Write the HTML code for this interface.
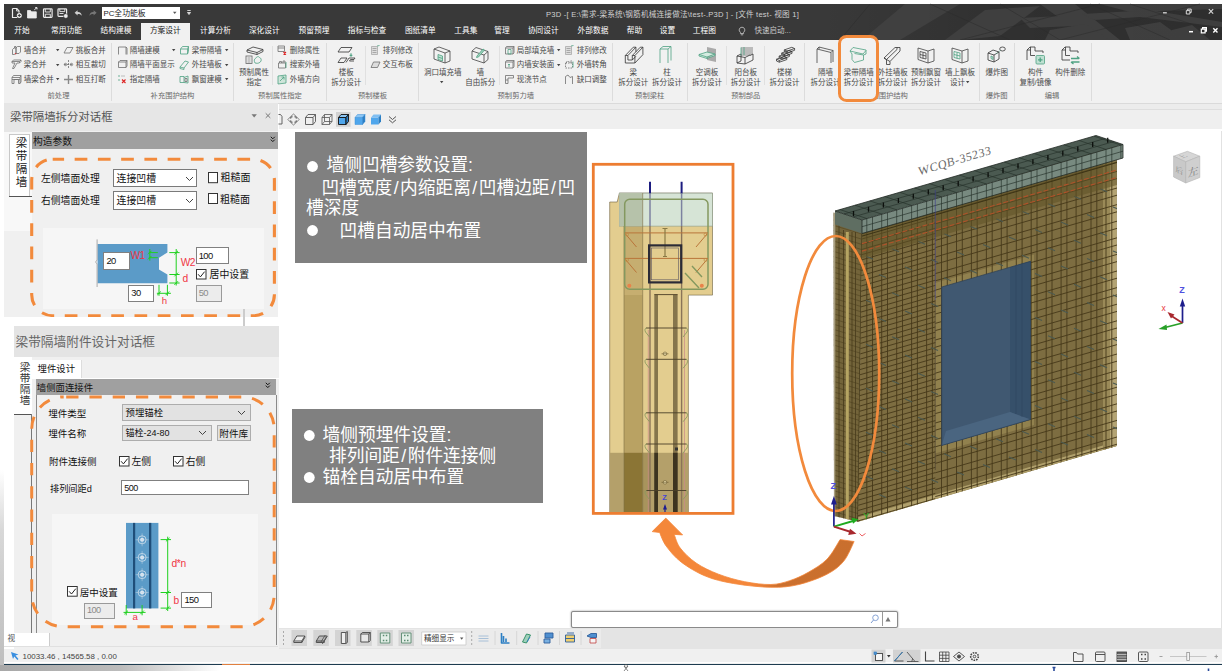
<!DOCTYPE html>
<html lang="zh-CN"><head><meta charset="utf-8"><title>P3D</title>
<style>
html,body{margin:0;padding:0;background:#fff;}
body{width:1230px;height:671px;overflow:hidden;position:relative;font-family:"Liberation Sans","Noto Sans CJK SC",sans-serif;}
#root{position:absolute;left:0;top:0;width:1230px;height:671px;overflow:hidden;background:#fff;}
.t{position:absolute;white-space:nowrap;margin:0;padding:0;}
.b{position:absolute;box-sizing:content-box;margin:0;padding:0;}
svg{display:block;overflow:visible;}
</style></head>
<body><div id="root">
<!-- part_top -->
<div class="b" style="left:4px;top:4px;width:1218px;height:36px;background:#393939;"></div>
<div class="b" style="left:820px;top:4px;width:402px;height:36px;background:linear-gradient(to right,rgba(0,0,0,0) 0,rgba(0,0,0,.16) 45%,rgba(0,0,0,.2) 100%);"></div>
<svg class="b" style="left:4px;top:4px" width="1218" height="36" viewBox="4 4 1218 36">
<g fill="#434343" opacity=".8">
<polygon points="905,4 960,4 900,40 862,40"/>
<polygon points="985,10 1040,6 1000,36 960,40 945,40"/>
<polygon points="1040,4 1075,4 1120,40 1090,40"/>
<polygon points="1082,14 1150,10 1222,22 1222,27 1140,17 1095,20"/>
<polygon points="1100,4 1222,4 1222,9 1130,12"/>
<polygon points="1050,30 1085,24 1110,40 1045,40"/>
<polygon points="1125,28 1160,22 1185,40 1130,40"/>
<polygon points="1172,30 1192,25 1210,40 1168,40"/>
<polygon points="1020,18 1060,16 1075,26 1030,28"/>
</g>
<g stroke="#2a2a2a" stroke-width=".6" fill="none" opacity=".8">
<path d="M870 4L840 40M930 4L1010 40M1000 4L1060 40M1090 4L1170 40M1130 4L1222 34M960 40L1100 4M1060 40L1200 4"/>
</g></svg>
<svg class="b" style="left:4px;top:4px" width="200" height="18" viewBox="4 4 200 18">
<g fill="none" stroke="#ececec" stroke-width="1.200" stroke-linejoin="round">
<path d="M12.500 8.500h4.200l2.300 2.300v2M12.500 8.500v9h4.500"/><path d="M16.500 8.700v2.300h2.300" stroke-width=".8"/>
<circle cx="19.300" cy="15.500" r="2.500" fill="#ececec" stroke="none"/><path d="M19.300 14v3M17.800 15.500h3" stroke="#363636" stroke-width=".9"/>
<path d="M27.500 18v-7.500h3l1 1.300h4.800v6.200z" fill="#ececec" stroke-width=".8"/><path d="M34.300 9.800l2.500-2M35.200 7.600h1.800v1.800" stroke-width="1"/>
<rect x="43.500" y="8.800" width="8.600" height="8.600" rx=".8"/><path d="M45.300 9v3h5V9M45.300 17.200v-3h5v3" stroke-width=".9"/>
<rect x="58" y="8.800" width="8.600" height="7.600" rx=".8"/><path d="M59.800 9v2.600h5V9M59.500 13.500h4" stroke-width=".9"/><circle cx="65.800" cy="16" r="2.300" fill="#ececec" stroke="#363636" stroke-width=".6"/>
</g>
<path d="M74.600 12.800l3-2.600v1.700c2.500-.2 4 1.200 4.200 4-.9-1.400-2.200-1.900-4.200-1.800v1.500z" fill="#cfcfcf"/>
<path d="M96.600 12.800l-3-2.600v1.700c-2.500-.2-4 1.200-4.200 4 .9-1.400 2.200-1.900 4.200-1.800v1.500z" fill="#767676"/>
<path d="M187.300 10.500h3.400M187.500 12.500h3l-1.500 2z" stroke="#ddd" stroke-width=".9" fill="#ddd"/>
</svg>
<div class="b" style="left:102px;top:6.5px;width:78px;height:12.5px;background:#fff;"></div>
<div class="t" style="left:103.5px;top:8.6px;font-size:7.8px;line-height:10.9px;color:#222;">PC全功能板</div>
<svg class="b" style="left:172px;top:11px" width="6" height="4"><path d="M1 .8h3.500l-1.750 2.200z" fill="#555"/></svg>
<div class="t" style="left:546px;top:9.75px;font-size:7.6px;line-height:10.6px;color:#d0d0d0;letter-spacing:0.22px;">P3D -[ E:\需求-梁系统\钢筋机械连接做法\test-.P3D ] - [文件 test- 视图 1]</div>
<svg class="b" style="left:1150px;top:4px" width="72" height="36" viewBox="1150 4 72 36">
<g stroke="#d8d8d8" stroke-width="1.300" fill="none">
<path d="M1163 12.800h3.800"/>
<path d="M1186.300 10.600h3.600v3.400h-3.600z M1187.600 10.600v-1.500h3.600v3.400h-1.300" stroke-width="1"/>
<path d="M1208.800 9.200l4.400 4.400M1213.200 9.200l-4.400 4.400" stroke-width="1.100"/>
</g>
<g stroke="#fff" stroke-width="1.500" fill="none">
<path d="M1189 31.700h4"/>
<path d="M1201.300 29.200h3.800v3.600h-3.800z M1202.600 29.200v-1.600h3.800v3.600h-1.300" stroke-width="1.200"/>
<path d="M1213.300 28.300l4.200 4.200M1217.500 28.300l-4.200 4.200" stroke-width="1.400"/>
</g></svg>
<div class="b" style="left:141px;top:22.5px;width:48.5px;height:18px;background:#f1f1f1;"></div>
<div class="t" style="left:-8.0px;top:26.15px;font-size:7.7px;line-height:10.8px;color:#fff;width:60px;text-align:center;">开始</div>
<div class="t" style="left:36.5px;top:26.15px;font-size:7.7px;line-height:10.8px;color:#fff;width:60px;text-align:center;">常用功能</div>
<div class="t" style="left:86.0px;top:26.15px;font-size:7.7px;line-height:10.8px;color:#fff;width:60px;text-align:center;">结构建模</div>
<div class="t" style="left:135.3px;top:26.15px;font-size:7.7px;line-height:10.8px;color:#222;width:60px;text-align:center;">方案设计</div>
<div class="t" style="left:185.5px;top:26.15px;font-size:7.7px;line-height:10.8px;color:#fff;width:60px;text-align:center;">计算分析</div>
<div class="t" style="left:234.3px;top:26.15px;font-size:7.7px;line-height:10.8px;color:#fff;width:60px;text-align:center;">深化设计</div>
<div class="t" style="left:284.0px;top:26.15px;font-size:7.7px;line-height:10.8px;color:#fff;width:60px;text-align:center;">预留预埋</div>
<div class="t" style="left:337.0px;top:26.15px;font-size:7.7px;line-height:10.8px;color:#fff;width:60px;text-align:center;">指标与检查</div>
<div class="t" style="left:390.3px;top:26.15px;font-size:7.7px;line-height:10.8px;color:#fff;width:60px;text-align:center;">图纸清单</div>
<div class="t" style="left:435.8px;top:26.15px;font-size:7.7px;line-height:10.8px;color:#fff;width:60px;text-align:center;">工具集</div>
<div class="t" style="left:472.0px;top:26.15px;font-size:7.7px;line-height:10.8px;color:#fff;width:60px;text-align:center;">管理</div>
<div class="t" style="left:513.3px;top:26.15px;font-size:7.7px;line-height:10.8px;color:#fff;width:60px;text-align:center;">协同设计</div>
<div class="t" style="left:563.0px;top:26.15px;font-size:7.7px;line-height:10.8px;color:#fff;width:60px;text-align:center;">外部数据</div>
<div class="t" style="left:604.5px;top:26.15px;font-size:7.7px;line-height:10.8px;color:#fff;width:60px;text-align:center;">帮助</div>
<div class="t" style="left:637.5px;top:26.15px;font-size:7.7px;line-height:10.8px;color:#fff;width:60px;text-align:center;">设置</div>
<div class="t" style="left:674.4px;top:26.15px;font-size:7.7px;line-height:10.8px;color:#fff;width:60px;text-align:center;">工程图</div>
<div class="t" style="left:754.5px;top:26.3px;font-size:7.5px;line-height:10.5px;color:#c8c8c8;">快速启动...</div>
<svg class="b" style="left:737px;top:26px" width="10" height="11"><path d="M5 1.200a2.800 2.800 0 0 1 1.600 5.100v1.200h-3.200v-1.200a2.800 2.800 0 0 1 1.600-5.100z M3.800 8.800h2.400" fill="none" stroke="#ccc" stroke-width=".8"/></svg>
<!-- part_ribbon -->
<div class="b" style="left:4px;top:40px;width:1218px;height:63.5px;background:#f1f1f1;"></div>
<div class="b" style="left:4px;top:103px;width:1218px;height:1px;background:#dadada;"></div>
<svg class="b" style="left:10.5px;top:44.5px" width="11" height="11" viewBox="0 0 11 11" fill="none" stroke="#707070" stroke-width="0.8" stroke-linejoin="round"><path d="M1.500 9.500V4.500l1.500-1.500h2v5.500l-1.500 1zM5 8.500V3l1.500-1.500h3V7l-1.500 1.500z M3.500 3V1.500h1.500V3"/><path d="M3.800 8.700h1.400" stroke="#d33" stroke-width="1"/></svg><div class="t" style="left:23.8px;top:45.5px;font-size:7.5px;line-height:10.5px;color:#484848;">墙合并</div><svg class="b" style="left:55.5px;top:49px" width="4" height="3"><path d="M0 0h3.400l-1.700 2.200z" fill="#444"/></svg>
<svg class="b" style="left:10.5px;top:59.2px" width="11" height="11" viewBox="0 0 11 11" fill="none" stroke="#707070" stroke-width="0.8" stroke-linejoin="round"><path d="M1 2.500l1.500-1.500h7.500l-1.500 1.500z M1 2.500v1.500h3L1.500 9.500h1.500L6 4h2.500V2.500 M8.500 4l1.500-1.500V1"/></svg><div class="t" style="left:23.8px;top:60.2px;font-size:7.5px;line-height:10.5px;color:#484848;">梁合并</div><svg class="b" style="left:55.5px;top:63.7px" width="4" height="3"><path d="M0 0h3.400l-1.700 2.200z" fill="#444"/></svg>
<svg class="b" style="left:10.5px;top:73.5px" width="11" height="11" viewBox="0 0 11 11" fill="none" stroke="#707070" stroke-width="0.8" stroke-linejoin="round"><path d="M1 3.500l1.500-2h7.500l-1 2z M1 3.500v6h2v-4h4.500v4h1.500v-6 M9 9.500l1-1.500V1.500 M1 5.500h8"/></svg><div class="t" style="left:23.8px;top:74.5px;font-size:7.5px;line-height:10.5px;color:#484848;">墙梁合并</div><svg class="b" style="left:55.5px;top:78px" width="4" height="3"><path d="M0 0h3.400l-1.700 2.200z" fill="#444"/></svg>
<svg class="b" style="left:62.5px;top:44.5px" width="11" height="11" viewBox="0 0 11 11" fill="none" stroke="#707070" stroke-width="0.8" stroke-linejoin="round"><path d="M1 8l3-5.500h6L7 8z"/></svg><div class="t" style="left:75.8px;top:45.5px;font-size:7.5px;line-height:10.5px;color:#484848;">挑板合并</div>
<svg class="b" style="left:62.5px;top:59.2px" width="11" height="11" viewBox="0 0 11 11" fill="none" stroke="#707070" stroke-width="0.8" stroke-linejoin="round"><path d="M5.500 1v9M1 5.500h9" stroke-dasharray="2 1"/><circle cx="2.500" cy="5.500" r="1.200"/><circle cx="8.500" cy="5.500" r="1.200"/></svg><div class="t" style="left:75.8px;top:60.2px;font-size:7.5px;line-height:10.5px;color:#484848;">相互裁切</div>
<svg class="b" style="left:62.5px;top:73.5px" width="11" height="11" viewBox="0 0 11 11" fill="none" stroke="#707070" stroke-width="0.8" stroke-linejoin="round"><path d="M5.500 1v9M1 5.500h9" stroke="#888" stroke-width="1.400"/></svg><div class="t" style="left:75.8px;top:74.5px;font-size:7.5px;line-height:10.5px;color:#484848;">相互打断</div>
<div class="t" style="left:18.5px;top:90.65px;font-size:7.3px;line-height:10.2px;color:#6a6a6a;width:80px;text-align:center;">前处理</div>
<div class="b" style="left:111px;top:43px;width:1px;height:58px;background:#dcdcdc;"></div>
<svg class="b" style="left:116.5px;top:44.5px" width="11" height="11" viewBox="0 0 11 11" fill="none" stroke="#707070" stroke-width="0.8" stroke-linejoin="round"><path d="M1.500 9.500V2h7.500v7.500M9 2l1 1v6.500"/></svg><div class="t" style="left:129.8px;top:45.5px;font-size:7.5px;line-height:10.5px;color:#484848;">隔墙建模</div><svg class="b" style="left:172.0px;top:49px" width="4" height="3"><path d="M0 0h3.400l-1.700 2.200z" fill="#444"/></svg>
<svg class="b" style="left:116.5px;top:59.2px" width="11" height="11" viewBox="0 0 11 11" fill="none" stroke="#707070" stroke-width="0.8" stroke-linejoin="round"><path d="M1.500 3h7.500v5.500H1.500z M1.500 3l1.500-1.500h7L9 3 M10 1.500v5.500l-1 1.500"/></svg><div class="t" style="left:129.8px;top:60.2px;font-size:7.5px;line-height:10.5px;color:#484848;">隔墙平面显示</div>
<svg class="b" style="left:116.5px;top:73.5px" width="11" height="11" viewBox="0 0 11 11" fill="none" stroke="#707070" stroke-width="0.8" stroke-linejoin="round"><path d="M2 1v2M2 5v2" stroke="#4fa283"/><path d="M5 5.500l3.500 3.500M8.500 5.500L5 9" stroke="#d22" stroke-width="1.100"/><path d="M4.500 2h4" stroke-dasharray="1 1"/></svg><div class="t" style="left:129.8px;top:74.5px;font-size:7.5px;line-height:10.5px;color:#484848;">指定隔墙</div>
<svg class="b" style="left:178.5px;top:44.5px" width="11" height="11" viewBox="0 0 11 11" fill="none" stroke="#707070" stroke-width="0.8" stroke-linejoin="round"><path d="M1.500 4h7v5h-7z M1.500 4l2-2.500h6L8.500 4 M9.500 1.500v5l-1 2.500" stroke="#4fa283"/></svg><div class="t" style="left:191.8px;top:45.5px;font-size:7.5px;line-height:10.5px;color:#484848;">梁带隔墙</div><svg class="b" style="left:224.5px;top:49px" width="4" height="3"><path d="M0 0h3.400l-1.700 2.200z" fill="#444"/></svg>
<svg class="b" style="left:178.5px;top:59.2px" width="11" height="11" viewBox="0 0 11 11" fill="none" stroke="#707070" stroke-width="0.8" stroke-linejoin="round"><path d="M1 8l5-6 3.500 1L5 9z M1 8v1.500l4 1V9" stroke="#4fa283"/></svg><div class="t" style="left:191.8px;top:60.2px;font-size:7.5px;line-height:10.5px;color:#484848;">外挂墙板</div><svg class="b" style="left:224.5px;top:63.7px" width="4" height="3"><path d="M0 0h3.400l-1.700 2.200z" fill="#444"/></svg>
<svg class="b" style="left:178.5px;top:73.5px" width="11" height="11" viewBox="0 0 11 11" fill="none" stroke="#707070" stroke-width="0.8" stroke-linejoin="round"><path d="M1 2.500h4v6H1z M5 3.500l4-1.500v7l-4-.5" stroke="#4fa283"/><path d="M6 4.500h2v3H6z"/></svg><div class="t" style="left:191.8px;top:74.5px;font-size:7.5px;line-height:10.5px;color:#484848;">飘窗建模</div><svg class="b" style="left:224.5px;top:78px" width="4" height="3"><path d="M0 0h3.400l-1.700 2.200z" fill="#444"/></svg>
<div class="t" style="left:132.5px;top:90.65px;font-size:7.3px;line-height:10.2px;color:#6a6a6a;width:80px;text-align:center;">补充围护结构</div>
<div class="b" style="left:233px;top:43px;width:1px;height:58px;background:#dcdcdc;"></div>
<svg class="b" style="left:244.5px;top:46px" width="19" height="19" viewBox="0 0 19 19" fill="none" stroke="#646464" stroke-width="0.8" stroke-linejoin="miter"><path d="M2 4l6-3 10 2.500-6 3z M2 4v2l10 2.500V6.500 M18 3.500v2l-6 3" stroke="#333"/><rect x="1" y="10" width="6" height="7.500"/><path d="M2.500 12h3M2.500 14h3M2.500 16h3" stroke-width=".6"/><path d="M10 17c-1-2-1-4 .5-4.500 1-2 3-2.500 4-1 1.500.5 2 2 1.500 3.500-.5 1.500-3 3-6 2z" stroke="#4fa283"/></svg><div class="t" style="left:224.0px;top:68.0px;font-size:7.5px;line-height:10.5px;color:#484848;width:60px;text-align:center;">预制属性</div><div class="t" style="left:224.0px;top:78.1px;font-size:7.5px;line-height:10.5px;color:#484848;width:60px;text-align:center;">指定</div>
<div class="b" style="left:272px;top:46px;width:1px;height:39px;background:#e0e0e0;"></div>
<svg class="b" style="left:276.5px;top:44.5px" width="11" height="11" viewBox="0 0 11 11" fill="none" stroke="#707070" stroke-width="0.8" stroke-linejoin="round"><rect x="1" y="1" width="6.500" height="5.500"/><path d="M1 3h6.500"/><path d="M6.500 7l2.500 2.500M9 7L6.500 9.500" stroke="#d22" stroke-width="1.100"/></svg><div class="t" style="left:289.8px;top:45.5px;font-size:7.5px;line-height:10.5px;color:#484848;">删除属性</div>
<svg class="b" style="left:276.5px;top:59.2px" width="11" height="11" viewBox="0 0 11 11" fill="none" stroke="#707070" stroke-width="0.8" stroke-linejoin="round"><path d="M1.500 4h7v5h-7z M2.500 4V2.500h2V4M6 4V2h2v2"/><path d="M9 3v6" stroke="#4fa283"/></svg><div class="t" style="left:289.8px;top:60.2px;font-size:7.5px;line-height:10.5px;color:#484848;">搜索外墙</div>
<svg class="b" style="left:276.5px;top:73.5px" width="11" height="11" viewBox="0 0 11 11" fill="none" stroke="#707070" stroke-width="0.8" stroke-linejoin="round"><path d="M1 2l8-1v8l-8 1z" stroke="#4fa283" fill="#cfe5da"/><path d="M3 7l4-4M7 3v2.500M7 3H4.500" stroke="#4fa283"/></svg><div class="t" style="left:289.8px;top:74.5px;font-size:7.5px;line-height:10.5px;color:#484848;">外墙方向</div>
<div class="t" style="left:240.0px;top:90.65px;font-size:7.3px;line-height:10.2px;color:#6a6a6a;width:80px;text-align:center;">预制属性指定</div>
<div class="b" style="left:325.5px;top:43px;width:1px;height:58px;background:#dcdcdc;"></div>
<svg class="b" style="left:336.8px;top:46px" width="19" height="19" viewBox="0 0 19 19" fill="none" stroke="#646464" stroke-width="0.8" stroke-linejoin="miter"><path d="M1 6l3-4.500h11L12 6z" stroke="#333"/><path d="M1 16.500l3-4.500h6l-3 4.500z M9 16.500l3-4.500h6l-1 1.500h-3.500l-1 1.500H17" stroke="#333"/><path d="M14 7v3M12.800 9l1.200 1.500 1.200-1.500z" stroke="#4fa283" fill="#4fa283"/></svg><div class="t" style="left:316.3px;top:68.0px;font-size:7.5px;line-height:10.5px;color:#484848;width:60px;text-align:center;">楼板</div><div class="t" style="left:316.3px;top:78.1px;font-size:7.5px;line-height:10.5px;color:#484848;width:60px;text-align:center;">拆分设计</div>
<div class="b" style="left:365px;top:46px;width:1px;height:39px;background:#e0e0e0;"></div>
<svg class="b" style="left:369.5px;top:44.5px" width="11" height="11" viewBox="0 0 11 11" fill="none" stroke="#707070" stroke-width="0.8" stroke-linejoin="round"><path d="M1.500 1.500h6v8h-6z" fill="#ddd" stroke="#aaa"/><path d="M2.500 3.500h4M2.500 5.500h4M2.500 7.500h4" stroke="#999"/><path d="M7 1l2.500-.5" stroke="#4fa283"/></svg><div class="t" style="left:382.8px;top:45.5px;font-size:7.5px;line-height:10.5px;color:#484848;">排列修改</div>
<svg class="b" style="left:369.5px;top:59.2px" width="11" height="11" viewBox="0 0 11 11" fill="none" stroke="#707070" stroke-width="0.8" stroke-linejoin="round"><path d="M1 8.500L3.500 3H10L7.500 8.500z" fill="#ddd"/></svg><div class="t" style="left:382.8px;top:60.2px;font-size:7.5px;line-height:10.5px;color:#484848;">交互布板</div>
<div class="t" style="left:332.5px;top:90.65px;font-size:7.3px;line-height:10.2px;color:#6a6a6a;width:80px;text-align:center;">预制楼板</div>
<div class="b" style="left:418.3px;top:43px;width:1px;height:58px;background:#dcdcdc;"></div>
<svg class="b" style="left:433.3px;top:46px" width="19" height="19" viewBox="0 0 19 19" fill="none" stroke="#646464" stroke-width="0.8" stroke-linejoin="miter"><path d="M1 3l5-2 11 4v10l-5 2L1 13z M12 7v10M1 3l11 4 5-2" stroke="#444"/><path d="M5 8.500l4.500 1.500v5L5 13.500z M5 11l4.500 1.500" stroke="#4fa283" fill="#bfe0d2"/></svg><div class="t" style="left:412.8px;top:68.0px;font-size:7.5px;line-height:10.5px;color:#484848;width:60px;text-align:center;">洞口填充墙</div>
<svg class="b" style="left:440.0px;top:81px" width="4" height="3"><path d="M0 0h3.400l-1.700 2.200z" fill="#444"/></svg>
<svg class="b" style="left:470.8px;top:46px" width="19" height="19" viewBox="0 0 19 19" fill="none" stroke="#646464" stroke-width="0.8" stroke-linejoin="miter"><path d="M1 5l4-3.500 12 4v8l-4 3.500L1 13z M13 9v8M1 5l12 4 4-3.500" stroke="#444"/><path d="M6 10l6-7 1.500 1-6 7-2 .5z" stroke="#4fa283" fill="#9fd0bb"/></svg><div class="t" style="left:450.3px;top:68.0px;font-size:7.5px;line-height:10.5px;color:#484848;width:60px;text-align:center;">墙</div><div class="t" style="left:450.3px;top:78.1px;font-size:7.5px;line-height:10.5px;color:#484848;width:60px;text-align:center;">自由拆分</div>
<div class="b" style="left:499px;top:46px;width:1px;height:39px;background:#e0e0e0;"></div>
<svg class="b" style="left:503.5px;top:44.5px" width="11" height="11" viewBox="0 0 11 11" fill="none" stroke="#707070" stroke-width="0.8" stroke-linejoin="round"><path d="M1.500 3h7.500v6H1.500z M1.500 3l1-1.500h7.500L9 3 M10 1.500V7.500L9 9"/><path d="M4 4.500h3v4.500H4z" stroke="#4fa283"/></svg><div class="t" style="left:516.8px;top:45.5px;font-size:7.5px;line-height:10.5px;color:#484848;">局部填充墙</div><svg class="b" style="left:557.0px;top:49px" width="4" height="3"><path d="M0 0h3.400l-1.700 2.200z" fill="#444"/></svg>
<svg class="b" style="left:503.5px;top:59.2px" width="11" height="11" viewBox="0 0 11 11" fill="none" stroke="#707070" stroke-width="0.8" stroke-linejoin="round"><path d="M1.500 3h7.500v6H1.500z M1.500 3l1-1.500h7.500L9 3 M10 1.500V7.500L9 9"/><path d="M5 8V5M4 6l1-1 1 1" stroke="#4fa283"/></svg><div class="t" style="left:516.8px;top:60.2px;font-size:7.5px;line-height:10.5px;color:#484848;">内墙安装面</div><svg class="b" style="left:557.0px;top:63.7px" width="4" height="3"><path d="M0 0h3.400l-1.700 2.200z" fill="#444"/></svg>
<svg class="b" style="left:503.5px;top:73.5px" width="11" height="11" viewBox="0 0 11 11" fill="none" stroke="#707070" stroke-width="0.8" stroke-linejoin="round"><path d="M1.500 1.500h8v2.500h-5.500v5.500H1.500z"/><path d="M1.500 6h2.500" /></svg><div class="t" style="left:516.8px;top:74.5px;font-size:7.5px;line-height:10.5px;color:#484848;">现浇节点</div>
<svg class="b" style="left:563.5px;top:44.5px" width="11" height="11" viewBox="0 0 11 11" fill="none" stroke="#707070" stroke-width="0.8" stroke-linejoin="round"><path d="M1.500 1.500h6v8h-6z" fill="#ddd" stroke="#aaa"/><path d="M2.500 3.500h4M2.500 5.500h4M2.500 7.500h4" stroke="#999"/><path d="M7 1l2.500-.5" stroke="#4fa283"/></svg><div class="t" style="left:576.8px;top:45.5px;font-size:7.5px;line-height:10.5px;color:#484848;">排列修改</div>
<svg class="b" style="left:563.5px;top:59.2px" width="11" height="11" viewBox="0 0 11 11" fill="none" stroke="#707070" stroke-width="0.8" stroke-linejoin="round"><path d="M1.500 4h7v5h-7z M2.500 4V2.500h2V4M6 4V2h2v2" stroke-dasharray="1.500 1"/><path d="M9 2.500v6" stroke="#4fa283"/></svg><div class="t" style="left:576.8px;top:60.2px;font-size:7.5px;line-height:10.5px;color:#484848;">外墙转角</div>
<svg class="b" style="left:563.5px;top:73.5px" width="11" height="11" viewBox="0 0 11 11" fill="none" stroke="#707070" stroke-width="0.8" stroke-linejoin="round"><path d="M1.500 10V2.500l2.500-1.500 2 2.500 2.500-1V10"/></svg><div class="t" style="left:576.8px;top:74.5px;font-size:7.5px;line-height:10.5px;color:#484848;">缺口调整</div>
<div class="t" style="left:475.79999999999995px;top:90.65px;font-size:7.3px;line-height:10.2px;color:#6a6a6a;width:80px;text-align:center;">预制剪力墙</div>
<div class="b" style="left:611.7px;top:43px;width:1px;height:58px;background:#dcdcdc;"></div>
<svg class="b" style="left:623.8px;top:46px" width="19" height="19" viewBox="0 0 19 19" fill="none" stroke="#646464" stroke-width="0.8" stroke-linejoin="miter"><path d="M1.300 17V9.500h2.600V14h4.400V9.500h2.600V17Z M1.300 9.500l8-8.300h2.600l-8 8.300 M8.300 9.500l8-8.300h2.600l-8 8.300 M10.900 17l8-8.300V1.200 M11.900 1.200v4.600 M8.300 14l3.600-3.700" stroke="#333"/></svg><div class="t" style="left:603.3px;top:68.0px;font-size:7.5px;line-height:10.5px;color:#484848;width:60px;text-align:center;">梁</div><div class="t" style="left:603.3px;top:78.1px;font-size:7.5px;line-height:10.5px;color:#484848;width:60px;text-align:center;">拆分设计</div>
<svg class="b" style="left:657.5px;top:46px" width="19" height="19" viewBox="0 0 19 19" fill="none" stroke="#646464" stroke-width="0.8" stroke-linejoin="miter"><path d="M2 17V3l3-2.500h8L10 3v14 M2 3h8 M13 .5v14" stroke="#4fa283"/></svg><div class="t" style="left:637.0px;top:68.0px;font-size:7.5px;line-height:10.5px;color:#484848;width:60px;text-align:center;">柱</div><div class="t" style="left:637.0px;top:78.1px;font-size:7.5px;line-height:10.5px;color:#484848;width:60px;text-align:center;">拆分设计</div>
<div class="t" style="left:609.7px;top:90.65px;font-size:7.3px;line-height:10.2px;color:#6a6a6a;width:80px;text-align:center;">预制梁柱</div>
<div class="b" style="left:686.7px;top:43px;width:1px;height:58px;background:#dcdcdc;"></div>
<svg class="b" style="left:697.5px;top:46px" width="19" height="19" viewBox="0 0 19 19" fill="none" stroke="#646464" stroke-width="0.8" stroke-linejoin="miter"><path d="M9 1l9 2v13l-9-2z" fill="#aaa" stroke="none"/><path d="M1 8.500l8-2.500 8 2-8 3z M1 8.500v1.500l8 2.500V11 M17 8v1.500l-8 3" stroke="#4fa283" fill="#d5ebe1"/></svg><div class="t" style="left:677.0px;top:68.0px;font-size:7.5px;line-height:10.5px;color:#484848;width:60px;text-align:center;">空调板</div><div class="t" style="left:677.0px;top:78.1px;font-size:7.5px;line-height:10.5px;color:#484848;width:60px;text-align:center;">拆分设计</div>
<div class="b" style="left:726.3px;top:46px;width:1px;height:39px;background:#e0e0e0;"></div>
<svg class="b" style="left:736.3px;top:46px" width="19" height="19" viewBox="0 0 19 19" fill="none" stroke="#646464" stroke-width="0.8" stroke-linejoin="miter"><path d="M5 1h12v9H5z" fill="#bbb" stroke="none"/><path d="M1 10l4-2v7l-4 2z M1 17l8 1 8-4V8l-3 1.500 M1 10l8 1.500V18 M9 11.500l5-2.500" stroke="#333" fill="#f1f1f1"/><path d="M5 1.500v8M8 1v8" stroke="#4fa283"/></svg><div class="t" style="left:715.8px;top:68.0px;font-size:7.5px;line-height:10.5px;color:#484848;width:60px;text-align:center;">阳台板</div><div class="t" style="left:715.8px;top:78.1px;font-size:7.5px;line-height:10.5px;color:#484848;width:60px;text-align:center;">拆分设计</div>
<div class="b" style="left:764px;top:46px;width:1px;height:39px;background:#e0e0e0;"></div>
<svg class="b" style="left:775.0px;top:46px" width="19" height="19" viewBox="0 0 19 19" fill="none" stroke="#646464" stroke-width="0.8" stroke-linejoin="miter"><path d="M1.5 13.2l7.500-2.600 2.800 1.200-7.500 2.600z M1.5 13.2v1.800l2.800 1.200v-1.800 M4.3 16.2l7.500-2.600v-1.800 M4.1 10.1l7.500-2.600 2.800 1.200-7.500 2.600z M4.1 10.1v1.800l2.800 1.200v-1.800 M6.9 13.1l7.500-2.600v-1.800 M6.7 7.0l7.500-2.600 2.800 1.200-7.500 2.600z M6.7 7.0v1.800l2.800 1.200v-1.800 M9.5 10.0l7.500-2.600v-1.800 M9.3 3.9l7.500-2.600 2.800 1.200-7.500 2.600z M9.3 3.9v1.800l2.800 1.200v-1.800 M12.1 6.9l7.500-2.600v-1.800" stroke="#333"/></svg><div class="t" style="left:754.5px;top:68.0px;font-size:7.5px;line-height:10.5px;color:#484848;width:60px;text-align:center;">楼梯</div><div class="t" style="left:754.5px;top:78.1px;font-size:7.5px;line-height:10.5px;color:#484848;width:60px;text-align:center;">拆分设计</div>
<div class="t" style="left:705.8px;top:90.65px;font-size:7.3px;line-height:10.2px;color:#6a6a6a;width:80px;text-align:center;">预制部品</div>
<div class="b" style="left:804px;top:43px;width:1px;height:58px;background:#dcdcdc;"></div>
<svg class="b" style="left:816.0px;top:46px" width="19" height="19" viewBox="0 0 19 19" fill="none" stroke="#646464" stroke-width="0.8" stroke-linejoin="miter"><path d="M1 17V3l2-2 14 3.500V16 M3 1v2M1 3l14 3.500V17 M15 6.500l2-2" stroke="#444"/></svg><div class="t" style="left:795.5px;top:68.0px;font-size:7.5px;line-height:10.5px;color:#484848;width:60px;text-align:center;">隔墙</div><div class="t" style="left:795.5px;top:78.1px;font-size:7.5px;line-height:10.5px;color:#484848;width:60px;text-align:center;">拆分设计</div>
<div class="t" style="left:846.0px;top:90.65px;font-size:7.3px;line-height:10.2px;color:#6a6a6a;width:80px;text-align:center;">预制围护结构</div>
<svg class="b" style="left:883.3px;top:46px" width="19" height="19" viewBox="0 0 19 19" fill="none" stroke="#646464" stroke-width="0.8" stroke-linejoin="miter"><path d="M1 12L12 1.500l5 0V5L7 15.500v3H3.500v-5z M1 12l2.500 1.500L14 3.500V1.500 M7 15.500L3.500 13.500" stroke="#333"/></svg><div class="t" style="left:862.8px;top:68.0px;font-size:7.5px;line-height:10.5px;color:#484848;width:60px;text-align:center;">外挂墙板</div><div class="t" style="left:862.8px;top:78.1px;font-size:7.5px;line-height:10.5px;color:#484848;width:60px;text-align:center;">拆分设计</div>
<div class="b" style="left:837.500px;top:35px;width:35.200px;height:60.700px;border:3px solid #f28a3c;border-radius:8.500px;background:#f1f1f1;"></div>
<svg class="b" style="left:849.3px;top:46px" width="19" height="19" viewBox="0 0 19 19" fill="none" stroke="#646464" stroke-width="0.8" stroke-linejoin="miter"><path d="M1 5l3-3.500 13 2.500v4l-2.500 1v5l-9 2.500-2.500-3V8z M1 5l13 3 3-3.500 M14.500 9L5.500 7.500" stroke="#4fa283"/></svg><div class="t" style="left:828.8px;top:68.0px;font-size:7.5px;line-height:10.5px;color:#484848;width:60px;text-align:center;">梁带隔墙</div><div class="t" style="left:828.8px;top:78.1px;font-size:7.5px;line-height:10.5px;color:#484848;width:60px;text-align:center;">拆分设计</div>
<svg class="b" style="left:916.5px;top:46px" width="19" height="19" viewBox="0 0 19 19" fill="none" stroke="#646464" stroke-width="0.8" stroke-linejoin="miter"><path d="M1 2l10 3v12L1 13.500z M11 5l6-2v12l-6 2" stroke="#444"/><path d="M3 5.500l6 1.500v6l-6-1.500z M6 6.500v6 M3 8.500l6 1.500" stroke="#444"/></svg><div class="t" style="left:896.0px;top:68.0px;font-size:7.5px;line-height:10.5px;color:#484848;width:60px;text-align:center;">预制飘窗</div><div class="t" style="left:896.0px;top:78.1px;font-size:7.5px;line-height:10.5px;color:#484848;width:60px;text-align:center;">拆分设计</div>
<svg class="b" style="left:950.5px;top:46px" width="19" height="19" viewBox="0 0 19 19" fill="none" stroke="#646464" stroke-width="0.8" stroke-linejoin="miter"><path d="M1 2l10 3v12L1 13.500z M11 5l6-2v12l-6 2" stroke="#444"/><path d="M3 5.500l6 1.500v6l-6-1.500z M6 6.500v6 M3 8.500l6 1.500" stroke="#4fa283"/></svg><div class="t" style="left:930.0px;top:68.0px;font-size:7.5px;line-height:10.5px;color:#484848;width:60px;text-align:center;">墙上飘板</div>
<div class="t" style="left:927.5px;top:78.1px;font-size:7.5px;line-height:10.5px;color:#484848;width:60px;text-align:center;">设计</div>
<svg class="b" style="left:966.0px;top:80.5px" width="4" height="3"><path d="M0 0h3.400l-1.700 2.200z" fill="#444"/></svg>
<div class="b" style="left:979px;top:43px;width:1px;height:58px;background:#dcdcdc;"></div>
<svg class="b" style="left:987.2px;top:46px" width="19" height="19" viewBox="0 0 19 19" fill="none" stroke="#646464" stroke-width="0.8" stroke-linejoin="miter"><path d="M1 7l5-3 6 2v7l-5 3-6-2z M1 7l6 2 5-3 M7 9v7" stroke="#333"/><path d="M4 10l2 1v2.500l-2-1z" stroke="#4fa283" fill="#cfe5da"/><ellipse cx="15.500" cy="3" rx="2.800" ry="2" stroke="#333"/><path d="M9 8l5-4" stroke="#4fa283" stroke-dasharray="1 1"/></svg><div class="t" style="left:966.7px;top:68.0px;font-size:7.5px;line-height:10.5px;color:#484848;width:60px;text-align:center;">爆炸图</div>
<div class="t" style="left:956.7px;top:90.65px;font-size:7.3px;line-height:10.2px;color:#6a6a6a;width:80px;text-align:center;">爆炸图</div>
<div class="b" style="left:1013.7px;top:43px;width:1px;height:58px;background:#dcdcdc;"></div>
<svg class="b" style="left:1026.0px;top:46px" width="19" height="19" viewBox="0 0 19 19" fill="none" stroke="#646464" stroke-width="0.8" stroke-linejoin="miter"><path d="M1 14V4l3-3h5v4h8v2 M1 4h3.500V1 M4.500 4v5.500H9" stroke="#333"/><rect x="10" y="9.500" width="8.500" height="8.500" rx="1" fill="#bfe0d2" stroke="#4fa283"/><path d="M14.200 11.500v4.500M12 13.800h4.500" stroke="#4fa283" stroke-width="1.300"/></svg><div class="t" style="left:1005.5px;top:68.0px;font-size:7.5px;line-height:10.5px;color:#484848;width:60px;text-align:center;">构件</div><div class="t" style="left:1005.5px;top:78.1px;font-size:7.5px;line-height:10.5px;color:#484848;width:60px;text-align:center;">复制/镜像</div>
<svg class="b" style="left:1060.8px;top:46px" width="19" height="19" viewBox="0 0 19 19" fill="none" stroke="#646464" stroke-width="0.8" stroke-linejoin="miter"><path d="M1 14V4l3-3h5v4h8v2 M1 4h3.500V1 M4.500 4v5.500H9 M1 14h8" stroke="#333"/><path d="M10 12.500h8M16 10.500l2.500 2M10.500 16h8M12.500 18l-2.500-2" stroke="#4fa283" stroke-width="1.300"/></svg><div class="t" style="left:1040.3px;top:68.0px;font-size:7.5px;line-height:10.5px;color:#484848;width:60px;text-align:center;">构件删除</div>
<div class="t" style="left:1012.0px;top:90.65px;font-size:7.3px;line-height:10.2px;color:#6a6a6a;width:80px;text-align:center;">编辑</div>
<div class="b" style="left:1090.5px;top:43px;width:1px;height:58px;background:#dcdcdc;"></div>
<!-- part_left -->
<div class="b" style="left:4px;top:104px;width:274px;height:546px;background:#f0f0f0;"></div>
<div class="b" style="left:4px;top:103.3px;width:274.4px;height:29px;background:#e6e6e6;"></div>
<div class="t" style="left:10px;top:108.9px;font-size:11.4px;line-height:16.0px;color:#555;">梁带隔墙拆分对话框</div>
<svg class="b" style="left:250px;top:112px" width="24" height="8"><path d="M1.500 2.200h5.400l-2.700 3.200z" fill="#777"/><path d="M15.700 1.300l4.600 4.600M20.300 1.300l-4.600 4.600" stroke="#777" stroke-width="1"/></svg>
<div class="b" style="left:4px;top:132.3px;width:28px;height:99px;background:#f8f8f8;"></div>
<div class="b" style="left:9.4px;top:134px;width:18.4px;height:61px;background:#fff;border:1px solid #c8c8c8;border-bottom:1.300px solid #555;"></div>
<div class="t" style="left:14.5px;top:135.25px;font-size:11.5px;line-height:16.1px;color:#222;width:14px;text-align:center;">梁</div>
<div class="t" style="left:14.5px;top:148.15px;font-size:11.5px;line-height:16.1px;color:#222;width:14px;text-align:center;">带</div>
<div class="t" style="left:14.5px;top:161.05px;font-size:11.5px;line-height:16.1px;color:#222;width:14px;text-align:center;">隔</div>
<div class="t" style="left:14.5px;top:173.95px;font-size:11.5px;line-height:16.1px;color:#222;width:14px;text-align:center;">墙</div>
<div class="b" style="left:9px;top:196px;width:23px;height:1.2px;background:#555;"></div>
<div class="b" style="left:32px;top:131px;width:246px;height:190px;background:#f0f0f0;"></div>
<div class="b" style="left:4px;top:231px;width:28px;height:90px;background:#f0f0f0;"></div>
<div class="b" style="left:32px;top:132.3px;width:246px;height:16.8px;background:#a0a0a0;"></div>
<div class="t" style="left:33px;top:134.9px;font-size:9.75px;line-height:13.6px;color:#111;">构造参数</div>
<svg class="b" style="left:270px;top:136px" width="6" height="7"><path d="M.8 .8l2 2 2-2M.8 3.600l2 2 2-2" fill="none" stroke="#111" stroke-width="1"/></svg>
<div class="t" style="left:41px;top:171.55px;font-size:9.8px;line-height:13.7px;color:#111;">左侧墙面处理</div>
<div class="b" style="left:113px;top:168.8px;width:81.6px;height:16.7px;background:#fff;border:1px solid #7a7a7a;"></div><div class="t" style="left:116.5px;top:171.6px;font-size:9.9px;line-height:13.9px;color:#111;">连接凹槽</div><svg class="b" style="left:184.6px;top:175.65px" width="9" height="6"><path d="M1 1l3.500 3.500L8 1" fill="none" stroke="#444" stroke-width="1"/></svg>
<svg class="b" style="left:208px;top:171.5px" width="10" height="11.2"><rect x=".5" y=".5" width="9" height="10.2" fill="#fff" stroke="#333" stroke-width="1"/></svg>
<div class="t" style="left:220.5px;top:171.1px;font-size:10px;line-height:14.0px;color:#111;">粗糙面</div>
<div class="t" style="left:41px;top:193.55px;font-size:9.8px;line-height:13.7px;color:#111;">右侧墙面处理</div>
<div class="b" style="left:113px;top:191px;width:81.6px;height:16.8px;background:#fff;border:1px solid #7a7a7a;"></div><div class="t" style="left:116.5px;top:193.85px;font-size:9.9px;line-height:13.9px;color:#111;">连接凹槽</div><svg class="b" style="left:184.6px;top:197.9px" width="9" height="6"><path d="M1 1l3.500 3.500L8 1" fill="none" stroke="#444" stroke-width="1"/></svg>
<svg class="b" style="left:207.5px;top:193.3px" width="10" height="11"><rect x=".5" y=".5" width="9" height="10" fill="#fff" stroke="#333" stroke-width="1"/></svg>
<div class="t" style="left:220px;top:193.0px;font-size:10px;line-height:14.0px;color:#111;">粗糙面</div>
<div class="b" style="left:43px;top:228px;width:221px;height:81px;background:#f6f6f6;"></div>
<svg class="b" style="left:43px;top:228px" width="221" height="81" viewBox="43 228 221 81">
<path d="M97.600 244.100H167.400V252.600L159 257.700V269.400L167.400 274.500V283.300H97.600Z" fill="#5b9bc8"/>
<path d="M97.100 239.400V260l-1.500 2 1.500 2V287" stroke="#a0a0a0" stroke-width=".9" fill="none"/>
<g stroke="#1fd11f" stroke-width="1" fill="none">
<path d="M148.800 252.600h9M148.800 257.700h9M149.800 249v11.600M148 254.300l3.500-3.500M148 259.400l3.500-3.500"/>
<path d="M176.200 249v36.500M169.300 252.600h10.300M169.300 274.500h10.300M169.300 283h10.300M174.400 254.400l3.600-3.600M174.400 276.300l3.600-3.600M174.400 284.800l3.600-3.600"/>
<path d="M156.900 293.300h14M159 284.800v11M167.400 284.800v11M157.200 295.100l3.600-3.600M165.600 295.100l3.600-3.600"/>
</g></svg>
<div class="b" style="left:103.4px;top:252.3px;width:24.4px;height:15.5px;background:#fff;border:1px solid #808080;"></div><div class="t" style="left:106.4px;top:253.85px;font-size:9.4px;line-height:13.2px;color:#111;letter-spacing:-0.55px;">20</div>
<div class="t" style="left:130.5px;top:248.95px;font-size:10.2px;line-height:14.3px;color:#f03545;letter-spacing:-0.5px;">W1</div>
<div class="b" style="left:195.7px;top:247.4px;width:31px;height:15px;background:#fff;border:1px solid #808080;"></div><div class="t" style="left:198.7px;top:248.7px;font-size:9.4px;line-height:13.2px;color:#111;letter-spacing:-0.55px;">100</div>
<div class="t" style="left:180.7px;top:256.25px;font-size:10.2px;line-height:14.3px;color:#f03545;letter-spacing:-0.5px;">W2</div>
<svg class="b" style="left:195.7px;top:268.7px" width="10.5" height="10.5"><rect x=".5" y=".5" width="9.5" height="9.5" fill="#fff" stroke="#333" stroke-width="1"/><path d="M2.1 5.25l2.31 2.625l4.2-5.25" fill="none" stroke="#222" stroke-width="1"/></svg>
<div class="t" style="left:209.6px;top:267.95px;font-size:9.9px;line-height:13.9px;color:#111;">居中设置</div>
<div class="t" style="left:182.5px;top:272.25px;font-size:10.2px;line-height:14.3px;color:#f03545;">d</div>
<div class="b" style="left:128.3px;top:284.5px;width:24.1px;height:15.8px;background:#fff;border:1px solid #808080;"></div><div class="t" style="left:131.3px;top:286.2px;font-size:9.4px;line-height:13.2px;color:#111;letter-spacing:-0.55px;">30</div>
<div class="t" style="left:161.7px;top:294.3px;font-size:9.6px;line-height:13.4px;color:#f03545;">h</div>
<div class="b" style="left:195.7px;top:284.5px;width:24px;height:15.8px;background:#ececec;border:1px solid #9a9a9a;"></div><div class="t" style="left:198.7px;top:286.2px;font-size:9.4px;line-height:13.2px;color:#8a8a8a;letter-spacing:-0.55px;">50</div>
<svg class="b" style="left:25px;top:150px" width="260" height="175" viewBox="25 150 260 175"><rect x="31.700" y="159.200" width="242.700" height="156.500" rx="21" ry="21" fill="none" stroke="#f28a3c" stroke-width="3.100" stroke-dasharray="12.700 10.550" stroke-dashoffset="1.300"/></svg>
<div class="b" style="left:4px;top:316.5px;width:274px;height:10px;background:#fff;"></div>
<div class="b" style="left:4px;top:321px;width:12px;height:330px;background:#fff;"></div>
<div class="b" style="left:243px;top:309px;width:2px;height:18px;background:#ccc;"></div>
<div class="b" style="left:14px;top:325.6px;width:265px;height:31.7px;background:#e4e4e4;"></div>
<div class="t" style="left:15.5px;top:333.5px;font-size:12.7px;line-height:17.8px;color:#666;">梁带隔墙附件设计对话框</div>
<div class="b" style="left:14px;top:357px;width:265px;height:293px;background:#f0f0f0;"></div>
<div class="b" style="left:14px;top:357px;width:17.5px;height:57px;background:#fff;"></div>
<div class="t" style="left:18.0px;top:360.0px;font-size:10.6px;line-height:14.8px;color:#333;width:14px;text-align:center;">梁</div>
<div class="t" style="left:18.0px;top:371.1px;font-size:10.6px;line-height:14.8px;color:#333;width:14px;text-align:center;">带</div>
<div class="t" style="left:18.0px;top:382.2px;font-size:10.6px;line-height:14.8px;color:#333;width:14px;text-align:center;">隔</div>
<div class="t" style="left:18.0px;top:393.3px;font-size:10.6px;line-height:14.8px;color:#333;width:14px;text-align:center;">墙</div>
<div class="b" style="left:14px;top:413.5px;width:17.5px;height:1.2px;background:#555;"></div>
<div class="b" style="left:31.5px;top:360px;width:49px;height:17.5px;background:#fff;border-right:1px solid #ddd;"></div>
<div class="t" style="left:37.5px;top:362.3px;font-size:9.4px;line-height:13.2px;color:#111;">埋件设计</div>
<div class="b" style="left:31.5px;top:377.5px;width:247px;height:1px;background:#fff;"></div>
<div class="b" style="left:35.5px;top:379px;width:240px;height:15.5px;background:#a0a0a0;"></div>
<div class="t" style="left:36.8px;top:381.1px;font-size:9.4px;line-height:13.2px;color:#111;">墙侧面连接件</div>
<svg class="b" style="left:264.500px;top:382px" width="6" height="7"><path d="M.8 .8l2 2 2-2M.8 3.600l2 2 2-2" fill="none" stroke="#111" stroke-width="1"/></svg>
<div class="b" style="left:35.5px;top:394.5px;width:239px;height:250px;background:#f0f0f0;border:0;border-left:1px solid #8a8a8a;border-right:1px solid #8a8a8a;"></div>
<div class="b" style="left:31px;top:414px;width:1.2px;height:232px;background:#777;"></div>
<div class="t" style="left:48.3px;top:407.15px;font-size:9.5px;line-height:13.3px;color:#111;">埋件类型</div>
<div class="b" style="left:122px;top:404px;width:126.5px;height:14.7px;background:#e2e2e2;border:1px solid #adadad;"></div><div class="t" style="left:125.5px;top:406.15px;font-size:9.4px;line-height:13.2px;color:#111;">预埋锚栓</div><svg class="b" style="left:236.5px;top:409.85px" width="9" height="6"><path d="M1 1l3.500 3.500L8 1" fill="none" stroke="#444" stroke-width="1"/></svg>
<div class="t" style="left:48.3px;top:427.25px;font-size:9.5px;line-height:13.3px;color:#111;">埋件名称</div>
<div class="b" style="left:122px;top:424.5px;width:88.2px;height:14.5px;background:#e2e2e2;border:1px solid #adadad;"></div><div class="t" style="left:125.5px;top:426.85px;font-size:9px;line-height:12.6px;color:#111;">锚栓-24-80</div><svg class="b" style="left:198.2px;top:430.25px" width="9" height="6"><path d="M1 1l3.500 3.500L8 1" fill="none" stroke="#444" stroke-width="1"/></svg>
<div class="b" style="left:217px;top:424.5px;width:31.5px;height:14.5px;background:#e2e2e2;border:1px solid #adadad;"></div>
<div class="t" style="left:213.7px;top:426.5px;font-size:9.6px;line-height:13.4px;color:#111;width:40px;text-align:center;">附件库</div>
<div class="t" style="left:49px;top:455.15px;font-size:9.5px;line-height:13.3px;color:#111;">附件连接侧</div>
<svg class="b" style="left:119.3px;top:456.2px" width="10.5" height="10.5"><rect x=".5" y=".5" width="9.5" height="9.5" fill="#fff" stroke="#333" stroke-width="1"/><path d="M2.1 5.25l2.31 2.625l4.2-5.25" fill="none" stroke="#222" stroke-width="1"/></svg>
<div class="t" style="left:131.5px;top:455.35px;font-size:9.8px;line-height:13.7px;color:#111;">左侧</div>
<svg class="b" style="left:173px;top:455.5px" width="10.5" height="10.5"><rect x=".5" y=".5" width="9.5" height="9.5" fill="#fff" stroke="#333" stroke-width="1"/><path d="M2.1 5.25l2.31 2.625l4.2-5.25" fill="none" stroke="#222" stroke-width="1"/></svg>
<div class="t" style="left:185.7px;top:454.95px;font-size:9.8px;line-height:13.7px;color:#111;">右侧</div>
<div class="t" style="left:50px;top:482.95px;font-size:9.2px;line-height:12.9px;color:#111;">排列间距d</div>
<div class="b" style="left:121.3px;top:480px;width:125.4px;height:13.3px;background:#fff;border:1px solid #808080;"></div><div class="t" style="left:124.3px;top:482.35px;font-size:9px;line-height:12.6px;color:#111;letter-spacing:-0.55px;">500</div>
<div class="b" style="left:51.7px;top:514px;width:206.3px;height:111px;background:#f6f6f6;"></div>
<svg class="b" style="left:52px;top:514.500px" width="206" height="111" viewBox="52 514.500 206 111">
<rect x="126" y="522.400" width="32.400" height="85.500" fill="#5b9bc8"/>
<rect x="133" y="522.400" width="2.200" height="85.500" fill="#1f4e79"/><rect x="149" y="522.400" width="2.300" height="85.500" fill="#1f4e79"/>
<circle cx="142.100" cy="539.3" r="4" fill="none" stroke="#d4e2ee" stroke-width=".8"/><circle cx="142.100" cy="539.3" r="2" fill="#e3ecf4"/><path d="M135.600 539.3h13M142.100 532.8v13" stroke="#c5d5e4" stroke-width=".5"/><circle cx="142.100" cy="556.9" r="4" fill="none" stroke="#d4e2ee" stroke-width=".8"/><circle cx="142.100" cy="556.9" r="2" fill="#e3ecf4"/><path d="M135.600 556.9h13M142.100 550.4v13" stroke="#c5d5e4" stroke-width=".5"/><circle cx="142.100" cy="574.2" r="4" fill="none" stroke="#d4e2ee" stroke-width=".8"/><circle cx="142.100" cy="574.2" r="2" fill="#e3ecf4"/><path d="M135.600 574.2h13M142.100 567.7v13" stroke="#c5d5e4" stroke-width=".5"/><circle cx="142.100" cy="592" r="4" fill="none" stroke="#d4e2ee" stroke-width=".8"/><circle cx="142.100" cy="592" r="2" fill="#e3ecf4"/><path d="M135.600 592h13M142.100 585.5v13" stroke="#c5d5e4" stroke-width=".5"/>
<g stroke="#1fd11f" stroke-width="1" fill="none">
<path d="M167.700 536.200v74.300M160.600 539.100h10.400M160.600 592h10.400M160.600 607.600h10.400M165.900 540.900l3.600-3.600M165.900 593.800l3.600-3.600M165.900 609.400l3.600-3.600"/>
<path d="M123.500 611.900h22.100M126.200 604.500v10.300M142.100 604.500v10.300M124.400 613.700l3.600-3.600M140.300 613.700l3.600-3.600"/>
</g></svg>
<div class="t" style="left:171.5px;top:557.05px;font-size:10.2px;line-height:14.3px;color:#f03545;letter-spacing:-0.3px;">d*n</div>
<div class="t" style="left:173.6px;top:594.25px;font-size:10.2px;line-height:14.3px;color:#f03545;">b</div>
<div class="b" style="left:181.4px;top:592.4px;width:29.1px;height:14px;background:#fff;border:1px solid #808080;"></div><div class="t" style="left:184.4px;top:593.2px;font-size:9.4px;line-height:13.2px;color:#111;letter-spacing:-0.55px;">150</div>
<svg class="b" style="left:66.9px;top:586px" width="10.7" height="10.7"><rect x=".5" y=".5" width="9.7" height="9.7" fill="#fff" stroke="#333" stroke-width="1"/><path d="M2.14 5.35l2.3539999999999996 2.675l4.28-5.35" fill="none" stroke="#222" stroke-width="1"/></svg>
<div class="t" style="left:79.7px;top:585.55px;font-size:9.5px;line-height:13.3px;color:#111;">居中设置</div>
<div class="b" style="left:83.9px;top:602.7px;width:28.9px;height:13.9px;background:#ececec;border:1px solid #9a9a9a;"></div><div class="t" style="left:86.9px;top:603.6px;font-size:9.2px;line-height:12.9px;color:#8a8a8a;letter-spacing:-0.55px;">100</div>
<div class="t" style="left:132.6px;top:610.1px;font-size:9.6px;line-height:13.4px;color:#f03545;">a</div>
<svg class="b" style="left:25px;top:390px" width="260" height="245" viewBox="25 390 260 245"><rect x="31.700" y="396.900" width="242.500" height="229.900" rx="32" ry="32" fill="none" stroke="#f28a3c" stroke-width="3" stroke-dasharray="12.300 10.950" stroke-dashoffset="-2.500"/></svg>
<div class="b" style="left:4px;top:632.7px;width:45px;height:13.5px;background:#fff;border:0;border-right:1px solid #ccc;"></div>
<div class="t" style="left:7.5px;top:634.45px;font-size:7.6px;line-height:10.6px;color:#555;">视</div>
<div class="b" style="left:4px;top:646.2px;width:274px;height:1px;background:#e0e0e0;"></div>
<!-- part_view -->
<div class="b" style="left:278.5px;top:104px;width:943.5px;height:5px;background:#ececec;"></div>
<div class="b" style="left:278.5px;top:108.5px;width:943.5px;height:1px;background:#dedede;"></div>
<div class="b" style="left:278.5px;top:109.5px;width:943.5px;height:19.3px;background:#efefef;"></div>
<div class="b" style="left:278.5px;top:128.8px;width:943.5px;height:499.2px;background:#fff;"></div>
<svg class="b" style="left:278px;top:110px" width="125" height="20" viewBox="278 110 125 20" fill="none" stroke="#555" stroke-width=".9" stroke-linejoin="round">
<path d="M278.500 114.500h2l1.500 2v7.500h-3.500"/>
<path d="M293.500 114l2.800 2.600h-1.600c.3 1 .8 1.500 1.800 1.800v-1.600l2.600 2.700-2.600 2.700v-1.600c-1 .3-1.500.8-1.800 1.800h1.600l-2.800 2.600-2.800-2.600h1.600c-.3-1-.8-1.500-1.800-1.800v1.600l-2.600-2.700 2.600-2.700v1.600c1-.3 1.500-.8 1.800-1.800h-1.600z" stroke="#666" stroke-width=".8"/>
<path d="M305.500 117.500h7.500v7h-7.500z M305.500 117.500l2.500-3h7.500l-2.500 3 M315.500 114.500v7l-2.500 3"/>
<path d="M322 117.500h7.500v7h-7.500z M322 117.500l2.500-3h7.500l-2.500 3 M332 114.500v7l-2.500 3 M324.500 114.500v7h7.500 M324.500 121.500l-2.500 3" stroke-width=".8"/>
<rect x="336" y="112" width="14.600" height="14.800" fill="#d2d2d2" stroke="none"/>
<path d="M338.500 117.500h7.500v7h-7.500z" fill="#4fa6ec" stroke="#111"/><path d="M338.500 117.500l2.500-3h7.500l-2.500 3z" fill="#8cc6f4" stroke="#111"/><path d="M348.500 114.500v7l-2.500 3v-7z" fill="#2c7fc4" stroke="#111"/>
<path d="M355 117.500h7.500v7h-7.500z" fill="#4fa6ec" stroke="#3b8fd6" stroke-width=".5"/><path d="M355 117.500l2.500-3h7.500l-2.500 3z" fill="#8cc6f4" stroke="#3b8fd6" stroke-width=".5"/><path d="M365 114.500v7l-2.500 3v-7z" fill="#2c7fc4" stroke="#3b8fd6" stroke-width=".5"/>
<path d="M371 117.500h7.500v7h-7.500z" fill="#4fa6ec" stroke="none"/><path d="M371 117.500l2.500-3h7.500l-2.500 3z" fill="#7fbef2" stroke="none"/><path d="M381 114.500v7l-2.500 3v-7z" fill="#2c7fc4" stroke="none"/>
<path d="M389 116.500l3.500 3 3.500-3M389 119.800l3.500 3 3.500-3" stroke="#555" stroke-width="1"/>
</svg>
<div class="b" style="left:295px;top:131.8px;width:292px;height:131.7px;background:#808080;"></div>
<div class="t" style="left:326.6px;top:154.4px;font-size:17.7px;line-height:22px;color:#fff;">墙侧凹槽参数设置:</div>
<div class="t" style="left:321.4px;top:176.8px;font-size:17.7px;line-height:22px;color:#fff;">凹槽宽度<span style="padding:0 1.500px">/</span>内缩距离<span style="padding:0 1.500px">/</span>凹槽边距<span style="padding:0 1.500px">/</span>凹</div>
<div class="t" style="left:306px;top:197.0px;font-size:17.7px;line-height:22px;color:#fff;">槽深度</div>
<div class="t" style="left:339.6px;top:219.7px;font-size:17.7px;line-height:22px;color:#fff;">凹槽自动居中布置</div>
<svg class="b" style="left:305px;top:155px" width="16" height="90"><circle cx="7.500" cy="11.500" r="5.400" fill="#fff"/><circle cx="7.500" cy="75.500" r="5.400" fill="#fff"/></svg>
<div class="b" style="left:292.2px;top:408.5px;width:251px;height:94.5px;background:#808080;"></div>
<div class="t" style="left:322.6px;top:424.0px;font-size:17.7px;line-height:22px;color:#fff;">墙侧预埋件设置:</div>
<div class="t" style="left:329px;top:445.1px;font-size:17.7px;line-height:22px;color:#fff;">排列间距<span style="padding:0 1.500px">/</span>附件连接侧</div>
<div class="t" style="left:322.6px;top:466.2px;font-size:17.7px;line-height:22px;color:#fff;">锚栓自动居中布置</div>
<svg class="b" style="left:302px;top:425px" width="16" height="60"><circle cx="7.300" cy="10.500" r="5.400" fill="#fff"/><circle cx="7.300" cy="52.500" r="5.400" fill="#fff"/></svg>
<svg class="b" style="left:585px;top:155px" width="160" height="370" viewBox="585 155 160 370"><defs><clipPath id="secclip"><rect x="594.700" y="165.700" width="137" height="346.300"/></clipPath></defs><g clip-path="url(#secclip)"><path d="M609.700 202H617.200L619.400 193.100H712.500V295.100H688.400V515H609.700Z" fill="#e3cd8f" stroke="#6b6040" stroke-width=".6"/><rect x="624" y="226" width="18.700" height="69" fill="#c6ae70"/><rect x="624" y="295" width="18.700" height="220" fill="#b9a263"/><rect x="609.900" y="452.800" width="78.300" height="62" fill="#b4a06a"/><rect x="624" y="452.800" width="18.700" height="62" fill="#8b7535"/><rect x="642.700" y="452.800" width="7" height="62" fill="#a8945c"/><rect x="619.400" y="193.100" width="93.100" height="33" fill="#d6e4d6" stroke="#8a9a8a" stroke-width=".6"/><rect x="619.400" y="193.100" width="23.300" height="33" fill="#b6c2aa"/><path d="M624 226V515M642.700 193V515" stroke="#7d6f45" stroke-width=".6"/><rect x="654.300" y="294.600" width="3.700" height="221" fill="#85754c"/><rect x="673" y="294.600" width="4.600" height="221" fill="#85754c"/><path d="M654.300 294.600h23.300" stroke="#5a4c30" stroke-width="1"/><rect x="654.300" y="452.800" width="3.700" height="62" fill="#3d3420"/><rect x="673" y="452.800" width="4.600" height="62" fill="#3d3420"/><path d="M648.300 330V515M684.500 330V515" stroke="#c98a8a" stroke-width=".7"/><path d="M650 181.800V193.500M681.600 181.800V193.500" stroke="#1c1c80" stroke-width="2"/><path d="M650 193.500V226M681.600 193.500V226" stroke="#7c82a0" stroke-width="1.500"/><path d="M650 226V515M681.600 226V515" stroke="#8a7458" stroke-width="1.400"/><rect x="624.700" y="199.300" width="83.300" height="90" rx="5" fill="none" stroke="#84985f" stroke-width="1.500"/><path d="M624.700 232.900H708M624.700 258.400H708" stroke="#b9753a" stroke-width="1"/><path d="M625.500 234l11 13M625.500 259.500l11 13M707 234l-11 13M707 259.500l-11 13" stroke="#b9753a" stroke-width="1"/><path d="M685 273l14 15M692 266l10 11" stroke="#84985f" stroke-width="1.400"/><circle cx="627" cy="234.5" r="1.500" fill="none" stroke="#c08a40" stroke-width=".7"/><circle cx="705.5" cy="234.5" r="1.500" fill="none" stroke="#c08a40" stroke-width=".7"/><circle cx="627" cy="260" r="1.500" fill="none" stroke="#c08a40" stroke-width=".7"/><circle cx="705.5" cy="260" r="1.500" fill="none" stroke="#c08a40" stroke-width=".7"/><circle cx="629.300" cy="285.700" r="2" fill="#e8824a"/><circle cx="701.800" cy="285.700" r="2" fill="#e8824a"/><path d="M665 228V256M662.500 228.500h5M663 256.500h4" stroke="#8a7a45" stroke-width="1.200"/><rect x="649.100" y="245.400" width="32.100" height="37" fill="none" stroke="#2b2b36" stroke-width="2.200"/><rect x="651.600" y="248" width="27.100" height="31.800" fill="none" stroke="#5b5560" stroke-width=".6"/><path d="M646 328H686.400" stroke="#4a4028" stroke-width=".9"/><path d="M646.500 328c-1.500 0-2 2-1 4l4 5M686 328c1.500 0 2 2 1 4l-4 5" stroke="#8c9a60" stroke-width=".9" fill="none"/><path d="M646 359.3H686.400" stroke="#4a4028" stroke-width=".9"/><path d="M646.500 359.3c-1.500 0-2 2-1 4l4 5M686 359.3c1.500 0 2 2 1 4l-4 5" stroke="#8c9a60" stroke-width=".9" fill="none"/><path d="M646 412.8H686.400" stroke="#4a4028" stroke-width=".9"/><path d="M646.500 412.8c-1.500 0-2 2-1 4l4 5M686 412.8c1.500 0 2 2 1 4l-4 5" stroke="#8c9a60" stroke-width=".9" fill="none"/><path d="M646 444H686.400" stroke="#4a4028" stroke-width=".9"/><path d="M646.500 444c-1.500 0-2 2-1 4l4 5M686 444c1.500 0 2 2 1 4l-4 5" stroke="#8c9a60" stroke-width=".9" fill="none"/><path d="M646 490.5H686.400" stroke="#4a4028" stroke-width=".9"/><path d="M646.500 490.5c-1.500 0-2 2-1 4l4 5M686 490.5c1.500 0 2 2 1 4l-4 5" stroke="#8c9a60" stroke-width=".9" fill="none"/><circle cx="665" cy="353.8" r="1.800" fill="#e8d9a8" stroke="#6a5a30" stroke-width=".6"/><path d="M661.500 353.8h7" stroke="#6a5a30" stroke-width=".6"/><circle cx="665" cy="482.3" r="1.800" fill="#e8d9a8" stroke="#6a5a30" stroke-width=".6"/><path d="M661.500 482.3h7" stroke="#6a5a30" stroke-width=".6"/><rect x="675" y="447.500" width="3" height="3" fill="#333"/><path d="M665 513.500V508" stroke="#1c1c90" stroke-width="1.200"/><path d="M663 509.500l2-5.500 2 5.500z" fill="#1c1c90"/></g><text x="662.300" y="500.300" font-size="7.500" font-weight="bold" fill="#4646d8" font-family="Liberation Sans, sans-serif">Z</text><rect x="593.300" y="164.300" width="139.700" height="349.100" fill="none" stroke="#ed7d31" stroke-width="2.800"/></svg>
<svg class="b" style="left:780px;top:125px" width="442" height="430" viewBox="780 125 442 430"><defs><clipPath id="wf"><polygon points="862,221 1117,144.500 1117,446 858,521.800"/></clipPath><clipPath id="ef"><polygon points="833.500,212.500 862,221.500 858,521.800 834,516"/></clipPath></defs><polygon points="833.500,212.500 862,221.500 858,521.800 834,516" fill="#73643a"/><g clip-path="url(#ef)"><path d="M833.500 215.0l28 8.5M833.500 220.2l28 8.5M833.500 225.4l28 8.5M833.500 230.6l28 8.5M833.500 235.8l28 8.5M833.500 241.0l28 8.5M833.500 246.2l28 8.5M833.500 251.4l28 8.5M833.500 256.6l28 8.5M833.500 261.8l28 8.5M833.500 267.0l28 8.5M833.500 272.2l28 8.5M833.500 277.4l28 8.5M833.500 282.6l28 8.5M833.500 287.8l28 8.5M833.500 293.0l28 8.5M833.500 298.2l28 8.5M833.500 303.4l28 8.5M833.500 308.6l28 8.5M833.500 313.8l28 8.5M833.500 319.0l28 8.5M833.500 324.2l28 8.5M833.500 329.4l28 8.5M833.500 334.6l28 8.5M833.500 339.8l28 8.5M833.500 345.0l28 8.5M833.500 350.2l28 8.5M833.500 355.4l28 8.5M833.500 360.6l28 8.5M833.500 365.8l28 8.5M833.500 371.0l28 8.5M833.500 376.2l28 8.5M833.500 381.4l28 8.5M833.500 386.6l28 8.5M833.500 391.8l28 8.5M833.500 397.0l28 8.5M833.500 402.2l28 8.5M833.500 407.4l28 8.5M833.500 412.6l28 8.5M833.500 417.8l28 8.5M833.500 423.0l28 8.5M833.500 428.2l28 8.5M833.500 433.4l28 8.5M833.500 438.6l28 8.5M833.500 443.8l28 8.5M833.500 449.0l28 8.5M833.500 454.2l28 8.5M833.500 459.4l28 8.5M833.500 464.6l28 8.5M833.500 469.8l28 8.5M833.500 475.0l28 8.5M833.500 480.2l28 8.5M833.500 485.4l28 8.5M833.500 490.6l28 8.5M833.500 495.8l28 8.5M833.500 501.0l28 8.5M833.500 506.2l28 8.5M833.500 511.4l28 8.5M833.500 516.6l28 8.5" stroke="#4a3e1c" stroke-width=".7" fill="none" opacity=".7"/><path d="M834.500 213V520" stroke="#a89e80" stroke-width="1.600"/><path d="M847.300 232V520" stroke="#b5a462" stroke-width="3"/><path d="M839 214V520M843.500 230V520M852 232V521M855.500 232V521" stroke="#463a1a" stroke-width=".8"/></g><path d="M862 221.500L858 521.800" stroke="#3a3014" stroke-width="1.200"/><polygon points="862,221.500 1116.500,145 1116.500,446 858,521.800" fill="#7d6d41"/><polygon points="858,521.800 1116.500,446 1116.500,441.500 858.100,517.300" fill="#b0a06c"/><polygon points="1103,162.500 1116.500,158.500 1116.500,446 1103,450" fill="#9a8a58"/><polygon points="1110,160.500 1116.500,158.500 1116.500,446 1110,448" fill="#b3a373"/><polygon points="935,283 1034,254.500 1034,425 935,453.500" fill="#938350" opacity=".9"/><g clip-path="url(#wf)"><path d="M851.8 140V530M857.6 140V530M866.8 140V530M872.5 140V530M881.7 140V530M887.5 140V530M896.7 140V530M902.5 140V530M911.6 140V530M917.4 140V530M926.6 140V530M932.4 140V530M941.5 140V530M947.3 140V530M956.5 140V530M962.3 140V530M971.4 140V530M977.2 140V530M986.4 140V530M992.2 140V530M1001.3 140V530M1007.1 140V530M1016.3 140V530M1022.1 140V530M1031.2 140V530M1037.0 140V530M1046.2 140V530M1052.0 140V530M1061.1 140V530M1066.9 140V530M1076.1 140V530M1081.9 140V530M1091.0 140V530M1096.8 140V530M1106.0 140V530M1111.8 140V530M846 150.0L935.3 124.2M846 155.2L935.3 129.4M846 160.4L935.3 134.6M846 165.6L935.3 139.8M846 170.8L935.3 145.0M846 176.0L935.3 150.2M846 181.2L935.3 155.4M846 186.4L935.3 160.6M846 191.6L935.3 165.8M846 196.8L935.3 171.0M846 202.0L935.3 176.2M846 207.2L935.3 181.4M846 212.4L935.3 186.6M846 217.6L935.3 191.8M846 222.8L935.3 197.0M846 228.0L935.3 202.2M846 233.2L935.3 207.4M846 238.4L935.3 212.6M846 243.6L935.3 217.8M846 248.8L935.3 223.0M846 254.0L935.3 228.2M846 259.2L935.3 233.4M846 264.4L935.3 238.6M846 269.6L935.3 243.8M846 274.8L935.3 249.0M846 280.0L935.3 254.2M846 285.2L935.3 259.4M846 290.4L935.3 264.6M846 295.6L935.3 269.8M846 300.8L935.3 275.0M846 306.0L935.3 280.2M846 311.2L935.3 285.4M846 316.4L935.3 290.6M846 321.6L935.3 295.8M846 326.8L935.3 301.0M846 332.0L935.3 306.2M846 337.2L935.3 311.4M846 342.4L935.3 316.6M846 347.6L935.3 321.8M846 352.8L935.3 327.0M846 358.0L935.3 332.2M846 363.2L935.3 337.4M846 368.4L935.3 342.6M846 373.6L935.3 347.8M846 378.8L935.3 353.0M846 384.0L935.3 358.2M846 389.2L935.3 363.4M846 394.4L935.3 368.6M846 399.6L935.3 373.8M846 404.8L935.3 379.0M846 410.0L935.3 384.2M846 415.2L935.3 389.4M846 420.4L935.3 394.6M846 425.6L935.3 399.8M846 430.8L935.3 405.0M846 436.0L935.3 410.2M846 441.2L935.3 415.4M846 446.4L935.3 420.6M846 451.6L935.3 425.8M846 456.8L935.3 431.0M846 462.0L935.3 436.2M846 467.2L935.3 441.4M846 472.4L935.3 446.6M846 477.6L935.3 451.8M846 482.8L935.3 457.0M846 488.0L935.3 462.2M846 493.2L935.3 467.4M846 498.4L935.3 472.6M846 503.6L935.3 477.8M846 508.8L935.3 483.0M846 514.0L935.3 488.2M846 519.2L935.3 493.4M846 524.4L935.3 498.6M846 529.6L935.3 503.8M846 534.8L935.3 509.0M846 540.0L935.3 514.2M846 545.2L935.3 519.4M846 550.4L935.3 524.6M846 555.6L935.3 529.8M846 560.8L935.3 535.0M846 566.0L935.3 540.2M846 571.2L935.3 545.4M846 576.4L935.3 550.6M846 581.6L935.3 555.8M846 586.8L935.3 561.0M846 592.0L935.3 566.2M846 597.2L935.3 571.4M846 602.4L935.3 576.6M846 607.6L935.3 581.8M846 612.8L935.3 587.0M846 618.0L935.3 592.2M935.3 124.2L1117 71.8M935.3 131.4L1117 79.0M935.3 140.8L1117 88.4M935.3 148.0L1117 95.6M935.3 157.4L1117 105.0M935.3 164.6L1117 112.2M935.3 174.0L1117 121.6M935.3 181.2L1117 128.8M935.3 190.6L1117 138.2M935.3 197.8L1117 145.4M935.3 207.2L1117 154.8M935.3 214.4L1117 162.0M935.3 223.8L1117 171.4M935.3 231.0L1117 178.6M935.3 240.4L1117 188.0M935.3 247.6L1117 195.2M935.3 257.0L1117 204.6M935.3 264.2L1117 211.8M935.3 273.6L1117 221.2M935.3 280.8L1117 228.4M935.3 290.2L1117 237.8M935.3 297.4L1117 245.0M935.3 306.8L1117 254.4M935.3 314.0L1117 261.6M935.3 323.4L1117 271.0M935.3 330.6L1117 278.2M935.3 340.0L1117 287.6M935.3 347.2L1117 294.8M935.3 356.6L1117 304.2M935.3 363.8L1117 311.4M935.3 373.2L1117 320.8M935.3 380.4L1117 328.0M935.3 389.8L1117 337.4M935.3 397.0L1117 344.6M935.3 406.4L1117 354.0M935.3 413.6L1117 361.2M935.3 423.0L1117 370.6M935.3 430.2L1117 377.8M935.3 439.6L1117 387.2M935.3 446.8L1117 394.4M935.3 456.2L1117 403.8M935.3 463.4L1117 411.0M935.3 472.8L1117 420.4M935.3 480.0L1117 427.6M935.3 489.4L1117 437.0M935.3 496.6L1117 444.2M935.3 506.0L1117 453.6M935.3 513.2L1117 460.8M935.3 522.6L1117 470.2M935.3 529.8L1117 477.4M935.3 539.2L1117 486.8M935.3 546.4L1117 494.0M935.3 555.8L1117 503.4M935.3 563.0L1117 510.6M935.3 572.4L1117 520.0M935.3 579.6L1117 527.2M935.3 589.0L1117 536.6M935.3 596.2L1117 543.8M935.3 605.6L1117 553.2M935.3 612.8L1117 560.4" stroke="#46391a" stroke-width=".9" fill="none"/><path d="M866.0 256.2l7 3M892.0 248.7l7 3M918.0 241.2l7 3M944.0 233.7l7 3M970.0 226.2l7 3M996.0 218.7l7 3M1022.0 211.2l7 3M1048.0 203.7l7 3M1074.0 196.2l7 3M1100.0 188.7l7 3M1126.0 181.2l7 3M879.0 274.5l7 3M905.0 267.0l7 3M931.0 259.5l7 3M957.0 252.0l7 3M983.0 244.5l7 3M1009.0 237.0l7 3M1035.0 229.5l7 3M1061.0 222.0l7 3M1087.0 214.5l7 3M1113.0 207.0l7 3M1139.0 199.5l7 3M866.0 300.2l7 3M892.0 292.7l7 3M918.0 285.2l7 3M944.0 277.7l7 3M970.0 270.2l7 3M996.0 262.7l7 3M1022.0 255.2l7 3M1048.0 247.7l7 3M1074.0 240.2l7 3M1100.0 232.7l7 3M1126.0 225.2l7 3M879.0 318.5l7 3M905.0 311.0l7 3M931.0 303.5l7 3M957.0 296.0l7 3M983.0 288.5l7 3M1009.0 281.0l7 3M1035.0 273.5l7 3M1061.0 266.0l7 3M1087.0 258.5l7 3M1113.0 251.0l7 3M1139.0 243.5l7 3M866.0 344.2l7 3M892.0 336.7l7 3M918.0 329.2l7 3M944.0 321.7l7 3M970.0 314.2l7 3M996.0 306.7l7 3M1022.0 299.2l7 3M1048.0 291.7l7 3M1074.0 284.2l7 3M1100.0 276.7l7 3M1126.0 269.2l7 3M879.0 362.5l7 3M905.0 355.0l7 3M931.0 347.5l7 3M957.0 340.0l7 3M983.0 332.5l7 3M1009.0 325.0l7 3M1035.0 317.5l7 3M1061.0 310.0l7 3M1087.0 302.5l7 3M1113.0 295.0l7 3M1139.0 287.5l7 3M866.0 388.2l7 3M892.0 380.7l7 3M918.0 373.2l7 3M944.0 365.7l7 3M970.0 358.2l7 3M996.0 350.7l7 3M1022.0 343.2l7 3M1048.0 335.7l7 3M1074.0 328.2l7 3M1100.0 320.7l7 3M1126.0 313.2l7 3M879.0 406.5l7 3M905.0 399.0l7 3M931.0 391.5l7 3M957.0 384.0l7 3M983.0 376.5l7 3M1009.0 369.0l7 3M1035.0 361.5l7 3M1061.0 354.0l7 3M1087.0 346.5l7 3M1113.0 339.0l7 3M1139.0 331.5l7 3M866.0 432.2l7 3M892.0 424.7l7 3M918.0 417.2l7 3M944.0 409.7l7 3M970.0 402.2l7 3M996.0 394.7l7 3M1022.0 387.2l7 3M1048.0 379.7l7 3M1074.0 372.2l7 3M1100.0 364.7l7 3M1126.0 357.2l7 3M879.0 450.5l7 3M905.0 443.0l7 3M931.0 435.5l7 3M957.0 428.0l7 3M983.0 420.5l7 3M1009.0 413.0l7 3M1035.0 405.5l7 3M1061.0 398.0l7 3M1087.0 390.5l7 3M1113.0 383.0l7 3M1139.0 375.5l7 3M866.0 476.2l7 3M892.0 468.7l7 3M918.0 461.2l7 3M944.0 453.7l7 3M970.0 446.2l7 3M996.0 438.7l7 3M1022.0 431.2l7 3M1048.0 423.7l7 3M1074.0 416.2l7 3M1100.0 408.7l7 3M1126.0 401.2l7 3M879.0 494.5l7 3M905.0 487.0l7 3M931.0 479.5l7 3M957.0 472.0l7 3M983.0 464.5l7 3M1009.0 457.0l7 3M1035.0 449.5l7 3M1061.0 442.0l7 3M1087.0 434.5l7 3M1113.0 427.0l7 3M1139.0 419.5l7 3M866.0 520.2l7 3M892.0 512.7l7 3M918.0 505.2l7 3M944.0 497.7l7 3M970.0 490.2l7 3M996.0 482.7l7 3M1022.0 475.2l7 3M1048.0 467.7l7 3M1074.0 460.2l7 3M1100.0 452.7l7 3M1126.0 445.2l7 3M879.0 538.5l7 3M905.0 531.0l7 3M931.0 523.5l7 3M957.0 516.0l7 3M983.0 508.5l7 3M1009.0 501.0l7 3M1035.0 493.5l7 3M1061.0 486.0l7 3M1087.0 478.5l7 3M1113.0 471.0l7 3M1139.0 463.5l7 3" stroke="#4c5a50" stroke-width="1.100" fill="none"/><polygon points="858,229.500 1117,155 1117,185 858,259.500" fill="#5e5226" opacity=".55"/></g><path d="M862 243.600L1117 170M862 251.100L1117 177.500" stroke="#b0522a" stroke-width="1.100" stroke-dasharray="5 2"/><path d="M862 236.100L1117 162.500" stroke="#3d3416" stroke-width="1"/><polygon points="941.700,287 1030.500,261.300 1030.500,419.500 941.700,445.500" fill="#405871"/><polygon points="1010,267.200 1030.500,261.300 1030.500,419.500 1010,412" fill="#36506a"/><polygon points="941.700,445.500 1030.500,419.500 1010,412 946,431" fill="#4a6580"/><path d="M941.700 287L1030.500 261.300V419.500L941.700 445.500Z" fill="none" stroke="#2c3f55" stroke-width=".7"/><path d="M1016 265.500V414M1022 263.800V417" stroke="#2f4560" stroke-width=".6"/><polygon points="835,211 1096,135.500 1123,144.500 862,220" fill="#4b5a51"/><polygon points="862,220 1123,144.500 1123,158 862,233.500" fill="#788a80"/><polygon points="835,211 862,220 862,233.500 835,224.500" fill="#5f6e62"/><path d="M866.8 218.6v13.5M872.5 217.0v13.5M881.7 214.3v13.5M887.5 212.6v13.5M896.7 210.0v13.5M902.5 208.3v13.5M911.6 205.7v13.5M917.4 204.0v13.5M926.6 201.4v13.5M932.4 199.7v13.5M941.5 197.1v13.5M947.3 195.4v13.5M956.5 192.8v13.5M962.3 191.1v13.5M971.4 188.4v13.5M977.2 186.8v13.5M986.4 184.1v13.5M992.2 182.5v13.5M1001.3 179.8v13.5M1007.1 178.1v13.5M1016.3 175.5v13.5M1022.1 173.8v13.5M1031.2 171.2v13.5M1037.0 169.5v13.5M1046.2 166.9v13.5M1052.0 165.2v13.5M1061.1 162.6v13.5M1066.9 160.9v13.5M1076.1 158.2v13.5M1081.9 156.6v13.5M1091.0 153.9v13.5M1096.8 152.3v13.5M1106.0 149.6v13.5M1111.8 147.9v13.5M1120.9 145.3v13.5M840.0 209.6l27 9M855.0 205.2l27 9M869.9 200.9l27 9M884.9 196.6l27 9M899.8 192.3l27 9M914.8 188.0l27 9M929.7 183.7l27 9M944.7 179.4l27 9M959.6 175.1l27 9M974.6 170.7l27 9M989.5 166.4l27 9M1004.5 162.1l27 9M1019.4 157.8l27 9M1034.4 153.5l27 9M1049.3 149.2l27 9M1064.3 144.9l27 9M1079.2 140.5l27 9M1094.2 136.2l27 9M844 214L1105 138.5M853 217L1114 141.5M862 226.700L1123 151.200" stroke="#26332b" stroke-width=".8" fill="none" opacity=".85"/><path d="M853.5 211.1v5M868.5 206.7v5M883.4 202.4v5M898.4 198.1v5M913.3 193.8v5M928.3 189.5v5M943.2 185.2v5M958.2 180.9v5M973.1 176.6v5M988.1 172.2v5M1003.0 167.9v5M1018.0 163.6v5M1032.9 159.3v5M1047.9 155.0v5M1062.8 150.7v5M1077.8 146.4v5M1092.7 142.0v5M1107.7 137.7v5" stroke="#0c0f0c" stroke-width="1.300" fill="none"/><path d="M835 211L1096 135.500L1123 144.500V158L862 233.500V220L835 211ZM862 220L1123 144.500" fill="none" stroke="#222a24" stroke-width=".8"/><path d="M935.300 190V300" stroke="#3a3a90" stroke-width=".6"/><path d="M935.300 300V470" stroke="#4a4030" stroke-width=".6"/><text transform="translate(919,175.500) rotate(-16.500) skewX(-8)" font-family="Liberation Serif, serif" font-size="12" fill="#6a6a6a" letter-spacing=".6">WCQB-35233</text></svg>
<svg class="b" style="left:640px;top:125px" width="582" height="480" viewBox="640 125 582 480">
<defs><linearGradient id="ag" x1="0" x2="1" y1="0" y2="0"><stop offset="0" stop-color="#f4873a"/><stop offset=".5" stop-color="#f4873a"/><stop offset=".62" stop-color="#cc702e"/><stop offset="1" stop-color="#c96f2e"/></linearGradient></defs>
<ellipse cx="835.700" cy="373.500" rx="43.500" ry="137.500" fill="none" stroke="#f28a3c" stroke-width="2.700"/>
<path d="M665.8 518.1L652.2 531.6L659.6 532.5C660.7 534.8 662.6 541.2 666.2 546.1C669.8 551.0 674.6 557.0 681.1 562.0C687.6 567.0 696.7 572.5 705.4 576.1C714.1 579.7 722.6 581.6 733.5 583.5C744.4 585.4 760.0 587.1 770.9 587.3C781.8 587.5 789.5 586.7 798.9 584.5C808.2 582.3 819.5 578.1 827.0 574.2C834.5 570.3 839.3 566.6 843.8 561.1C848.3 555.6 852.4 544.8 854.1 541.5L840.1 539.6C837.9 542.9 832.3 553.8 827.0 559.2C821.7 564.7 814.5 568.7 808.3 572.3C802.1 575.9 795.8 578.7 789.6 580.7C783.4 582.7 778.4 584.3 770.9 584.5C763.4 584.7 753.4 583.4 744.7 581.7C736.0 580.0 726.6 577.3 718.5 574.2C710.4 571.1 702.5 567.4 696.1 563.0C689.7 558.6 683.9 552.8 680.2 548.0C676.6 543.2 675.2 536.7 674.2 534.4L682.6 534.9Z" fill="url(#ag)" stroke="#f4873a" stroke-width=".8" stroke-linejoin="round"/>
<!-- axes at wall origin -->
<path d="M833.900 526.600V502" stroke="#1e1e8c" stroke-width="1.700"/><path d="M831 504.500l2.900-8.500 2.900 8.500z" fill="#1e1e8c"/>
<path d="M833.900 526.600L853 521" stroke="#1faa1f" stroke-width="1.900"/><path d="M851.500 517.800l7 1.500-5.500 4.500z" fill="#1faa1f"/>
<path d="M833.900 526.600L851 532" stroke="#a8282e" stroke-width="1.900"/><path d="M850 528.800l6.500 5-8.300 1.200z" fill="#a8282e"/>
<text x="830.600" y="489.300" font-size="9.500" font-weight="bold" fill="#5050e0" font-family="Liberation Sans, sans-serif">Z</text>
<text x="863" y="519.300" font-size="9" fill="#28b428" font-family="Liberation Sans, sans-serif">Y</text>
<path d="M859.500 533.500l2.500 2.500 3.500-2.500" stroke="#e8383d" stroke-width=".8" fill="none"/>
<!-- corner axes -->
<path d="M1182.500 323V304" stroke="#1e1e8c" stroke-width="1.700"/><path d="M1179.800 306.500l2.700-8 2.700 8z" fill="#1e1e8c"/>
<path d="M1182.500 323L1165 327.500" stroke="#28a028" stroke-width="1.800"/><path d="M1166.500 324.500l-8 4.500 8.500 1z" fill="#28a028"/>
<path d="M1182.500 323L1171.500 316" stroke="#a8282e" stroke-width="1.800"/><path d="M1174.500 314.500l-7-2.500 3.500 6.500z" fill="#a8282e"/>
<text x="1179.300" y="293.300" font-size="9" font-weight="bold" fill="#5050e0" font-family="Liberation Sans, sans-serif">Z</text>
<text x="1161.500" y="311.300" font-size="8.500" fill="#e8383d" font-family="Liberation Sans, sans-serif">x</text>
<!-- view cube -->
<g stroke="#b4b4b4" stroke-width=".6">
<path d="M1173.600 156.200L1187.400 151.300L1199.800 156.200L1185.700 161.800Z" fill="#d6d6d6"/>
<path d="M1173.600 156.200L1185.700 161.800V183L1173.600 177Z" fill="#c9c9c9"/>
<path d="M1185.700 161.800L1199.800 156.200V177.500L1185.700 183Z" fill="#cfcfcf"/>
</g>
<text transform="matrix(1,-0.39,0,1,1188,177.500)" font-size="10.500" fill="#7a7a7a" font-family="Liberation Serif, Noto Serif CJK SC, serif">左</text>
<text transform="matrix(1,0.46,0,1,1175.300,171.500)" font-size="8" fill="#8a8a8a" font-family="Liberation Serif, Noto Serif CJK SC, serif">后</text>
<text transform="matrix(0.9,-0.36,0.9,0.36,1181.500,158.800)" font-size="7" fill="#8f8f8f" font-family="Liberation Serif, Noto Serif CJK SC, serif">上</text>
</svg>
<div class="b" style="left:1221px;top:131px;width:1px;height:497px;background:#e2e2e2;"></div>
<div class="b" style="left:571.3px;top:611px;width:324.3px;height:15px;background:#fff;border:1px solid #8a8a8a;border-radius:2px;box-shadow:0 0 2px #888;"></div>
<div class="b" style="left:881.5px;top:612px;width:1px;height:14px;background:#999;"></div>
<svg class="b" style="left:868px;top:613px" width="28" height="12"><circle cx="7.500" cy="4.800" r="2.800" fill="none" stroke="#7a9ad0" stroke-width=".9"/><path d="M5.500 7l-2.500 3" stroke="#7a9ad0" stroke-width="1"/><path d="M17.500 8.500h5l-2.500-4.500z" fill="#777"/></svg>
<!-- part_bottom -->
<div class="b" style="left:278.5px;top:628px;width:943.5px;height:20.5px;background:#e4e4e4;"></div>
<div class="b" style="left:278.5px;top:629.3px;width:322px;height:19.2px;background:#ebebeb;"></div>
<div class="b" style="left:4px;top:648.5px;width:1218px;height:15px;background:#f0f0f0;"></div>
<div class="b" style="left:4px;top:662.3px;width:1218px;height:1.2px;background:#fff;"></div>
<div class="b" style="left:4px;top:663.5px;width:1218px;height:1.5px;background:#1e3c50;"></div>
<div class="b" style="left:222px;top:663.5px;width:28px;height:1.5px;background:#e08040;"></div>
<div class="b" style="left:0px;top:470px;width:4px;height:201px;background:linear-gradient(to bottom,#fff 0,#d8d8d8 30%,#bdbdbd 100%);"></div>
<div class="b" style="left:0px;top:665px;width:220px;height:6px;background:linear-gradient(to right,#a8a8a8 0,#bcbcbc 55%,#fff 100%);"></div>
<svg class="b" style="left:10px;top:651px" width="10" height="10"><path d="M1 1l7.500 2.500-3 1 3 3.500-1.200 1-3-3.500-1.300 2.500z" fill="#3a8fe0"/></svg>
<div class="t" style="left:22.5px;top:650.6px;font-size:7.9px;line-height:11.1px;color:#444;">10033.46 , 14565.58 , 0.00</div>
<svg class="b" style="left:278px;top:628px" width="330" height="20" viewBox="278 628 330 20" fill="none" stroke="#444" stroke-width=".9" stroke-linejoin="round"><path d="M283.500 631v2M283.500 635v2M283.500 639v2M283.500 643v2" stroke="#aaa" stroke-width="1"/><rect x="291.5" y="630" width="15.500" height="16" fill="#d4d4d4" stroke="none"/><rect x="313.3" y="630" width="15.500" height="16" fill="#d4d4d4" stroke="none"/><rect x="335" y="630" width="15.500" height="16" fill="#d4d4d4" stroke="none"/><rect x="356.3" y="630" width="15.500" height="16" fill="#d4d4d4" stroke="none"/><rect x="377.3" y="630" width="15.500" height="16" fill="#d4d4d4" stroke="none"/><rect x="398.5" y="630" width="15.500" height="16" fill="#d4d4d4" stroke="none"/><g transform="translate(1.3,0)"><path d="M292.500 641l3-5h8l-3 5z M292.500 641v1.500h8V641 M300.500 642.500l3-5V636" fill="#eee"/><path d="M315 641l3-5h8l-3 5z M315 641v1.500h8V641" fill="#bbb"/><path d="M319 643l5-8M321 644l4-7" stroke="#555"/><rect x="340" y="632.500" width="4.500" height="11" fill="#eee"/><path d="M344.500 632.500l1.500-1v11l-1.500 1"/><path d="M359.500 634h8v8h-8z M359.500 634l1.500-1.500h8l-1.500 1.500 M369 632.500v8l-1.500 1.500" fill="#e8e8e8"/></g><rect x="380.300" y="633" width="9.500" height="10" fill="#e4efe8" stroke="#5a8a70"/><path d="M382.800 635.500h1.500M385.800 635.500h1.500M382.800 640.500h1.500M385.800 640.500h1.500" stroke="#5a8a70" stroke-width="1.400"/><rect x="401.500" y="633" width="9.500" height="10" fill="#e4efe8" stroke="#5a8a70"/><path d="M404 635.500h1.500M407 635.500h1.500M404 640.500h1.500M407 640.500h1.500" stroke="#5a8a70" stroke-width="1.400"/><rect x="421.700" y="632" width="44.300" height="13" fill="#fff" stroke="#c8c8c8" stroke-width=".8"/><path d="M460 637.500h3.400l-1.700 2.200z" fill="#555" stroke="none"/><path d="M471.700 631v2M471.700 635v2M471.700 639v2M471.700 643v2" stroke="#aaa" stroke-width="1"/><path d="M478.500 636h10M478.500 638.500h10M478.500 641h10" stroke="#a8c0d8" stroke-width="1"/><path d="M495 631v14" stroke="#d0d0d0" stroke-width=".8"/><path d="M516.7 631v14" stroke="#d0d0d0" stroke-width=".8"/><path d="M538 631v14" stroke="#d0d0d0" stroke-width=".8"/><path d="M559.5 631v14" stroke="#d0d0d0" stroke-width=".8"/><path d="M581 631v14" stroke="#d0d0d0" stroke-width=".8"/><path d="M501.500 633v10h8M503.500 636v6M506 638.500v3.500" stroke="#2c7fc4" stroke-width="1.600"/><path d="M522.500 642l4-8 4 1-4 8z" fill="#9fd0bb" stroke="#2a8a60"/><path d="M527 642l3-5" stroke="#2c7fc4"/><rect x="545" y="633" width="8" height="5" fill="#4f8fd0" stroke="#2c5f9c"/><rect x="544" y="639" width="6" height="4" fill="#7ab0e0" stroke="#2c5f9c"/><rect x="565.500" y="635" width="9" height="7" fill="#f0d070" stroke="#2c5f9c"/><path d="M567 633h7M565.500 638.500h9" stroke="#2c5f9c"/><path d="M587 636l4-2.500h5.500v4H591z" fill="#4f8fd0" stroke="#2c5f9c"/><rect x="590" y="638.500" width="6" height="4.500" fill="#f5f5f5" stroke="#c04040" stroke-width=".8"/></svg>
<div class="t" style="left:424px;top:634.05px;font-size:7.6px;line-height:10.6px;color:#333;">精细显示</div>
<svg class="b" style="left:865px;top:649px" width="357" height="14" viewBox="865 649 357 14" fill="none" stroke="#444" stroke-width=".9"><rect x="871.500" y="649.500" width="14" height="13" fill="#d2d2d2" stroke="none"/><rect x="893" y="649.500" width="27.500" height="13" fill="#d2d2d2" stroke="none"/><rect x="875.500" y="653.500" width="7" height="7" fill="#f5f5f5"/><rect x="874" y="652" width="2.500" height="2.500" fill="#4f8fd0" stroke="#2c7fc4" stroke-width=".6"/><path d="M887 655h3.600l-1.800 2.400z" fill="#333" stroke="none"/><path d="M894.500 661h9M894.500 661l8-9" /><path d="M894.500 661l8-9" stroke="#2c7fc4"/><path d="M907 652l8 9.500M907 661.500h11.500M912.500 658.500a4 4 0 0 1-1 3" stroke-width=".8"/><path d="M925.500 651.500v9.500h9" stroke-width="1.100"/><path d="M939.500 652h9.500v9.500h-9.500zM942.700 652v9.500M945.900 652v9.500M939.500 655.200h9.500M939.500 658.400h9.500" stroke-width=".8"/><path d="M953.500 656.500l5.500-4.500 5.500 4.500-5.500 4.500z" stroke-width=".9"/><circle cx="959" cy="656.500" r="1.600" fill="#444"/><circle cx="974.500" cy="656.500" r="3.800" stroke-dasharray="1.600 1" stroke-width="1.600"/><circle cx="974.500" cy="656.500" r="1.300"/><path d="M1073.500 652.500h3l1 1.500h5.500v7.500h-9.500z"/><rect x="1095.500" y="652" width="9.500" height="9.500" rx="1"/><path d="M1095.500 654.500h9.500"/><rect x="1117" y="652" width="9.500" height="9.500" fill="#666"/><path d="M1117 654.500h9.500M1117 657h9.500M1117 659.500h9.500" stroke="#eee" stroke-width=".6"/><rect x="1138.500" y="652" width="9.500" height="9.500" rx="1"/><path d="M1141 654.500h1.500M1144.500 654.500h1.500M1141 659h1.500M1144.500 659h1.500" stroke-width="1.300"/><path d="M1159.500 656.500h3" stroke="#999"/><path d="M1170 656.500h36.500" stroke="#bbb" stroke-width=".8"/><rect x="1186.800" y="652.500" width="2.600" height="8" fill="#f5f5f5" stroke="#888" stroke-width=".7"/><path d="M1214.500 656.500h3.500M1216.300 654.700v3.600" stroke="#999"/></svg>
<svg class="b" style="left:600px;top:664px" width="630" height="8"><path d="M24 2l4 5M28 2l-4 5" stroke="#555" stroke-width=".7"/><circle cx="26" cy="2" r="1.500" fill="none" stroke="#555" stroke-width=".6"/><path d="M452.500 3.500h3M454 3.500v5M608.500 4.500v4" stroke="#2a4a9a" stroke-width="1.600"/></svg>
</div></body></html>
